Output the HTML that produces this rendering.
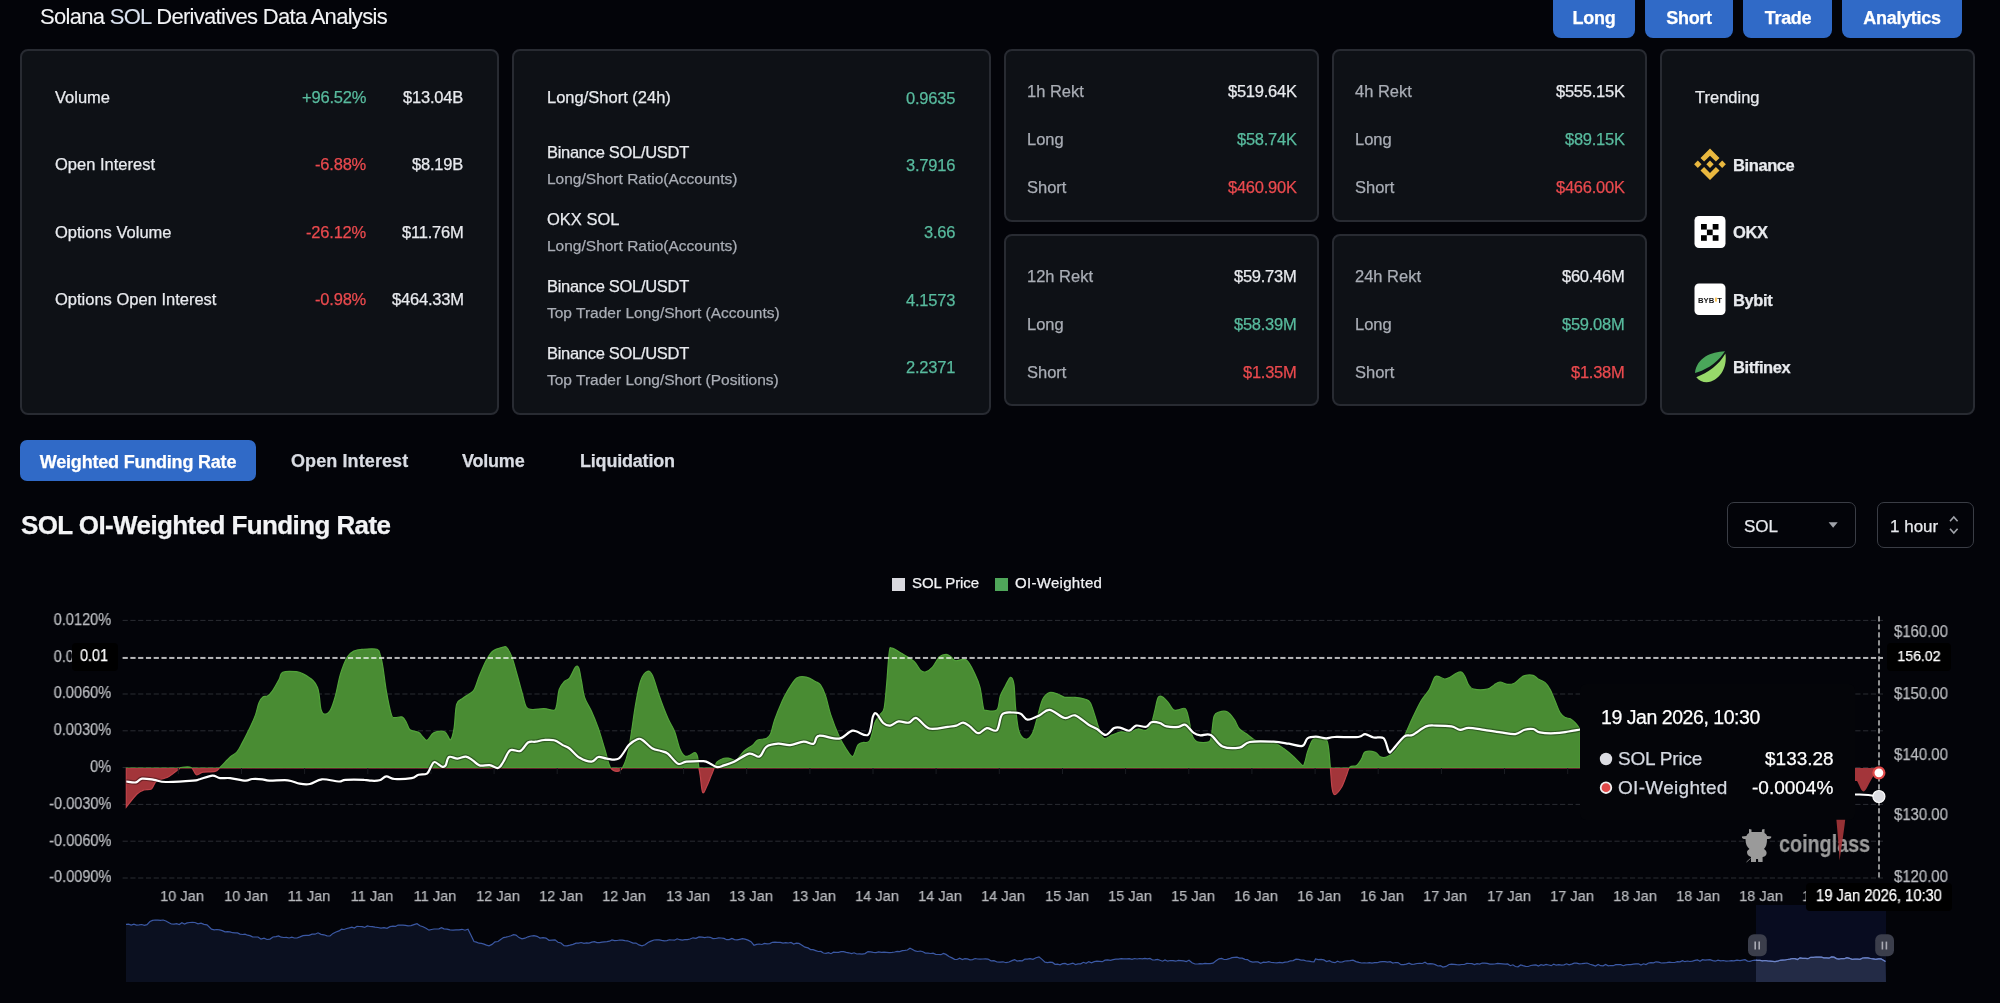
<!DOCTYPE html>
<html><head><meta charset="utf-8">
<style>
*{margin:0;padding:0;box-sizing:border-box}
html,body{width:2000px;height:1003px;overflow:hidden;background:#030409;font-family:"Liberation Sans",sans-serif;color:#e8eaee}
.a{position:absolute;white-space:nowrap;will-change:transform;-webkit-text-stroke:0.25px currentColor}
.card{position:absolute;background:#0e1116;border:2px solid #282b32;border-radius:8px}
.btn{position:absolute;top:-10px;height:48px;background:#306ac7;border-radius:8px}
svg{position:absolute;left:0;top:0}
</style></head><body>

<div class="a" style="top:5.98px;font-size:22px;line-height:22px;color:#f2f3f5;letter-spacing:-0.7px;left:40.20px;-webkit-text-stroke:0.1px currentColor;">Solana <span style="color:#d9e1ef">SOL</span> Derivatives Data Analysis</div>
<div class="btn" style="left:1553px;width:82px"></div>
<div class="a" style="top:8.56px;font-size:18px;line-height:18px;color:#ffffff;font-weight:bold;letter-spacing:-0.3px;left:1294.00px;width:600px;text-align:center;">Long</div>
<div class="btn" style="left:1645px;width:88px"></div>
<div class="a" style="top:8.56px;font-size:18px;line-height:18px;color:#ffffff;font-weight:bold;letter-spacing:-0.3px;left:1389.00px;width:600px;text-align:center;">Short</div>
<div class="btn" style="left:1743px;width:89px"></div>
<div class="a" style="top:8.56px;font-size:18px;line-height:18px;color:#ffffff;font-weight:bold;letter-spacing:-0.3px;left:1487.50px;width:600px;text-align:center;">Trade</div>
<div class="btn" style="left:1842px;width:120px"></div>
<div class="a" style="top:8.56px;font-size:18px;line-height:18px;color:#ffffff;font-weight:bold;letter-spacing:-0.3px;left:1602.00px;width:600px;text-align:center;">Analytics</div>
<div class="card" style="left:20px;top:49px;width:479px;height:366px"></div>
<div class="card" style="left:512px;top:49px;width:479px;height:366px"></div>
<div class="card" style="left:1004px;top:49px;width:315px;height:172.5px"></div>
<div class="card" style="left:1332px;top:49px;width:315px;height:172.5px"></div>
<div class="card" style="left:1004px;top:234.3px;width:315px;height:172.2px"></div>
<div class="card" style="left:1332px;top:234.3px;width:315px;height:172.2px"></div>
<div class="card" style="left:1660px;top:49px;width:315px;height:366px"></div>
<div class="a" style="top:88.93px;font-size:16.5px;line-height:16.5px;color:#e8eaee;left:55.00px;">Volume</div>
<div class="a" style="top:88.93px;font-size:16.5px;line-height:16.5px;color:#58bb9e;letter-spacing:-0.2px;right:1633.50px;text-align:right;">+96.52%</div>
<div class="a" style="top:88.93px;font-size:16.5px;line-height:16.5px;color:#e8eaee;letter-spacing:-0.2px;right:1536.50px;text-align:right;">$13.04B</div>
<div class="a" style="top:156.43px;font-size:16.5px;line-height:16.5px;color:#e8eaee;left:55.00px;">Open Interest</div>
<div class="a" style="top:156.43px;font-size:16.5px;line-height:16.5px;color:#ea4a4e;letter-spacing:-0.2px;right:1633.50px;text-align:right;">-6.88%</div>
<div class="a" style="top:156.43px;font-size:16.5px;line-height:16.5px;color:#e8eaee;letter-spacing:-0.2px;right:1536.50px;text-align:right;">$8.19B</div>
<div class="a" style="top:223.93px;font-size:16.5px;line-height:16.5px;color:#e8eaee;left:55.00px;">Options Volume</div>
<div class="a" style="top:223.93px;font-size:16.5px;line-height:16.5px;color:#ea4a4e;letter-spacing:-0.2px;right:1633.50px;text-align:right;">-26.12%</div>
<div class="a" style="top:223.93px;font-size:16.5px;line-height:16.5px;color:#e8eaee;letter-spacing:-0.2px;right:1536.50px;text-align:right;">$11.76M</div>
<div class="a" style="top:291.43px;font-size:16.5px;line-height:16.5px;color:#e8eaee;left:55.00px;">Options Open Interest</div>
<div class="a" style="top:291.43px;font-size:16.5px;line-height:16.5px;color:#ea4a4e;letter-spacing:-0.2px;right:1633.50px;text-align:right;">-0.98%</div>
<div class="a" style="top:291.43px;font-size:16.5px;line-height:16.5px;color:#e8eaee;letter-spacing:-0.2px;right:1536.50px;text-align:right;">$464.33M</div>
<div class="a" style="top:89.33px;font-size:16.5px;line-height:16.5px;color:#e8eaee;left:546.50px;">Long/Short (24h)</div>
<div class="a" style="top:143.83px;font-size:16.5px;line-height:16.5px;color:#e8eaee;letter-spacing:-0.3px;left:546.50px;">Binance SOL/USDT</div>
<div class="a" style="top:170.68px;font-size:15.5px;line-height:15.5px;color:#a9adb5;left:546.80px;">Long/Short Ratio(Accounts)</div>
<div class="a" style="top:211.03px;font-size:16.5px;line-height:16.5px;color:#e8eaee;left:546.50px;">OKX SOL</div>
<div class="a" style="top:237.88px;font-size:15.5px;line-height:15.5px;color:#a9adb5;left:546.80px;">Long/Short Ratio(Accounts)</div>
<div class="a" style="top:278.23px;font-size:16.5px;line-height:16.5px;color:#e8eaee;letter-spacing:-0.3px;left:546.50px;">Binance SOL/USDT</div>
<div class="a" style="top:305.08px;font-size:15.5px;line-height:15.5px;color:#a9adb5;left:546.80px;">Top Trader Long/Short (Accounts)</div>
<div class="a" style="top:345.43px;font-size:16.5px;line-height:16.5px;color:#e8eaee;letter-spacing:-0.3px;left:546.50px;">Binance SOL/USDT</div>
<div class="a" style="top:372.28px;font-size:15.5px;line-height:15.5px;color:#a9adb5;left:546.80px;">Top Trader Long/Short (Positions)</div>
<div class="a" style="top:89.93px;font-size:16.5px;line-height:16.5px;color:#58bb9e;letter-spacing:-0.2px;right:1044.40px;text-align:right;">0.9635</div>
<div class="a" style="top:157.13px;font-size:16.5px;line-height:16.5px;color:#58bb9e;letter-spacing:-0.2px;right:1044.40px;text-align:right;">3.7916</div>
<div class="a" style="top:224.33px;font-size:16.5px;line-height:16.5px;color:#58bb9e;letter-spacing:-0.2px;right:1044.40px;text-align:right;">3.66</div>
<div class="a" style="top:291.53px;font-size:16.5px;line-height:16.5px;color:#58bb9e;letter-spacing:-0.2px;right:1044.40px;text-align:right;">4.1573</div>
<div class="a" style="top:358.73px;font-size:16.5px;line-height:16.5px;color:#58bb9e;letter-spacing:-0.2px;right:1044.40px;text-align:right;">2.2371</div>
<div class="a" style="top:83.03px;font-size:16.5px;line-height:16.5px;color:#a9adb5;left:1026.50px;">1h Rekt</div>
<div class="a" style="top:83.03px;font-size:16.5px;line-height:16.5px;color:#e8eaee;letter-spacing:-0.25px;right:703.50px;text-align:right;">$519.64K</div>
<div class="a" style="top:131.03px;font-size:16.5px;line-height:16.5px;color:#a9adb5;left:1026.50px;">Long</div>
<div class="a" style="top:131.03px;font-size:16.5px;line-height:16.5px;color:#58bb9e;letter-spacing:-0.25px;right:703.50px;text-align:right;">$58.74K</div>
<div class="a" style="top:178.73px;font-size:16.5px;line-height:16.5px;color:#a9adb5;left:1026.50px;">Short</div>
<div class="a" style="top:178.73px;font-size:16.5px;line-height:16.5px;color:#ea4a4e;letter-spacing:-0.25px;right:703.50px;text-align:right;">$460.90K</div>
<div class="a" style="top:83.03px;font-size:16.5px;line-height:16.5px;color:#a9adb5;left:1354.50px;">4h Rekt</div>
<div class="a" style="top:83.03px;font-size:16.5px;line-height:16.5px;color:#e8eaee;letter-spacing:-0.25px;right:375.50px;text-align:right;">$555.15K</div>
<div class="a" style="top:131.03px;font-size:16.5px;line-height:16.5px;color:#a9adb5;left:1354.50px;">Long</div>
<div class="a" style="top:131.03px;font-size:16.5px;line-height:16.5px;color:#58bb9e;letter-spacing:-0.25px;right:375.50px;text-align:right;">$89.15K</div>
<div class="a" style="top:178.73px;font-size:16.5px;line-height:16.5px;color:#a9adb5;left:1354.50px;">Short</div>
<div class="a" style="top:178.73px;font-size:16.5px;line-height:16.5px;color:#ea4a4e;letter-spacing:-0.25px;right:375.50px;text-align:right;">$466.00K</div>
<div class="a" style="top:268.03px;font-size:16.5px;line-height:16.5px;color:#a9adb5;left:1026.50px;">12h Rekt</div>
<div class="a" style="top:268.03px;font-size:16.5px;line-height:16.5px;color:#e8eaee;letter-spacing:-0.25px;right:703.50px;text-align:right;">$59.73M</div>
<div class="a" style="top:316.03px;font-size:16.5px;line-height:16.5px;color:#a9adb5;left:1026.50px;">Long</div>
<div class="a" style="top:316.03px;font-size:16.5px;line-height:16.5px;color:#58bb9e;letter-spacing:-0.25px;right:703.50px;text-align:right;">$58.39M</div>
<div class="a" style="top:363.73px;font-size:16.5px;line-height:16.5px;color:#a9adb5;left:1026.50px;">Short</div>
<div class="a" style="top:363.73px;font-size:16.5px;line-height:16.5px;color:#ea4a4e;letter-spacing:-0.25px;right:703.50px;text-align:right;">$1.35M</div>
<div class="a" style="top:268.03px;font-size:16.5px;line-height:16.5px;color:#a9adb5;left:1354.50px;">24h Rekt</div>
<div class="a" style="top:268.03px;font-size:16.5px;line-height:16.5px;color:#e8eaee;letter-spacing:-0.25px;right:375.50px;text-align:right;">$60.46M</div>
<div class="a" style="top:316.03px;font-size:16.5px;line-height:16.5px;color:#a9adb5;left:1354.50px;">Long</div>
<div class="a" style="top:316.03px;font-size:16.5px;line-height:16.5px;color:#58bb9e;letter-spacing:-0.25px;right:375.50px;text-align:right;">$59.08M</div>
<div class="a" style="top:363.73px;font-size:16.5px;line-height:16.5px;color:#a9adb5;left:1354.50px;">Short</div>
<div class="a" style="top:363.73px;font-size:16.5px;line-height:16.5px;color:#ea4a4e;letter-spacing:-0.25px;right:375.50px;text-align:right;">$1.38M</div>
<div class="a" style="top:89.03px;font-size:16.5px;line-height:16.5px;color:#e8eaee;left:1694.70px;">Trending</div>
<div class="a" style="top:156.73px;font-size:16.5px;line-height:16.5px;color:#e8eaee;font-weight:bold;letter-spacing:-0.4px;left:1732.60px;">Binance</div>
<div class="a" style="top:223.53px;font-size:16.5px;line-height:16.5px;color:#e8eaee;font-weight:bold;letter-spacing:-0.4px;left:1732.60px;">OKX</div>
<div class="a" style="top:291.63px;font-size:16.5px;line-height:16.5px;color:#e8eaee;font-weight:bold;letter-spacing:-0.4px;left:1732.60px;">Bybit</div>
<div class="a" style="top:358.63px;font-size:16.5px;line-height:16.5px;color:#e8eaee;font-weight:bold;letter-spacing:-0.4px;left:1732.60px;">Bitfinex</div>
<svg width="2000" height="1003" style="pointer-events:none">
<g transform="translate(1710,164.3)" fill="#e9b83f">
 <rect x="-2.6" y="-2.6" width="5.2" height="5.2" transform="rotate(45)"/>
 <rect x="-14.8" y="-2.6" width="5.2" height="5.2" transform="rotate(45 -12.2 0)"/>
 <rect x="9.6" y="-2.6" width="5.2" height="5.2" transform="rotate(45 12.2 0)"/>
 <path d="M0,-15.8 L9.5,-6.3 L5.9,-2.7 L0,-8.6 L-5.9,-2.7 L-9.5,-6.3 Z"/>
 <path d="M0,15.8 L9.5,6.3 L5.9,2.7 L0,8.6 L-5.9,2.7 L-9.5,6.3 Z"/>
</g>
<rect x="1694.5" y="216" width="31" height="32" rx="4.5" fill="#ffffff"/>
<g fill="#000">
 <rect x="1701" y="224" width="5.8" height="5.6"/><rect x="1712.7" y="224" width="5.8" height="5.6"/>
 <rect x="1706.9" y="229.6" width="5.8" height="5.6"/>
 <rect x="1701" y="235.2" width="5.8" height="5.6"/><rect x="1712.7" y="235.2" width="5.8" height="5.6"/>
</g>
<rect x="1694.5" y="283.5" width="31" height="31.5" rx="4.5" fill="#ffffff"/>
<text x="1698" y="303.2" font-family="Liberation Sans" font-weight="bold" font-size="7.7" fill="#151515">BYB</text>
<rect x="1715.3" y="297.6" width="1.3" height="4" fill="#f7a600"/>
<text x="1717.2" y="303.2" font-family="Liberation Sans" font-weight="bold" font-size="7.7" fill="#151515">T</text>
<path d="M1725,351.3 C1711,352 1697,357.5 1695,372.9 C1703,371 1716,364.5 1723.6,353.2 Z" fill="#4aa65a"/>
<path d="M1725.4,353.6 C1719,365 1708,373 1696.3,377.2 C1700,382 1705.5,383 1711,381.6 C1720,378.5 1727.5,368 1725.4,353.6 Z" fill="#98d96a"/>
</svg>
<div class="a" style="left:20px;top:440.4px;width:236.4px;height:41px;background:#306ac7;border-radius:7px"></div>
<div class="a" style="top:452.76px;font-size:18px;line-height:18px;color:#ffffff;font-weight:bold;letter-spacing:-0.2px;left:-161.80px;width:600px;text-align:center;">Weighted Funding Rate</div>
<div class="a" style="top:452.46px;font-size:18px;line-height:18px;color:#d9dce3;font-weight:bold;letter-spacing:0.1px;left:290.60px;">Open Interest</div>
<div class="a" style="top:452.46px;font-size:18px;line-height:18px;color:#d9dce3;font-weight:bold;letter-spacing:-0.2px;left:461.50px;">Volume</div>
<div class="a" style="top:452.46px;font-size:18px;line-height:18px;color:#d9dce3;font-weight:bold;letter-spacing:-0.2px;left:579.70px;">Liquidation</div>
<div class="a" style="top:511.59px;font-size:26px;line-height:26px;color:#f2f3f5;font-weight:bold;letter-spacing:-0.6px;left:21.00px;">SOL OI-Weighted Funding Rate</div>
<div class="a" style="left:1727px;top:501.5px;width:129px;height:46.2px;border:1.3px solid #3a3d45;border-radius:7px"></div>
<div class="a" style="left:1877.3px;top:501.5px;width:97px;height:46.2px;border:1.3px solid #3a3d45;border-radius:7px"></div>
<div class="a" style="top:517.61px;font-size:17px;line-height:17px;color:#e8eaee;left:1744.00px;">SOL</div>
<div class="a" style="top:517.61px;font-size:17px;line-height:17px;color:#e8eaee;left:1889.70px;">1 hour</div>
<div class="a" style="top:575.20px;font-size:15px;line-height:15px;color:#f2f3f5;letter-spacing:-0.1px;left:911.80px;">SOL Price</div>
<div class="a" style="top:575.20px;font-size:15px;line-height:15px;color:#f2f3f5;letter-spacing:0.3px;left:1015.00px;">OI-Weighted</div>
<svg width="2000" height="1003">
<path d="M1828.6,522.3 L1837.7,522.3 L1833.15,527.8 Z" fill="#a0a3aa"/>
<path d="M1950,521.3 L1953.8,517 L1957.6,521.3 M1950,528.7 L1953.8,533 L1957.6,528.7" stroke="#a0a3aa" stroke-width="1.6" fill="none"/>
<rect x="892" y="578" width="13" height="13" fill="#d9d9df"/>
<rect x="995" y="578" width="13" height="13" fill="#4fa65a"/>
<line x1="122.6" y1="620.4" x2="1883" y2="620.4" stroke="#2a2c33" stroke-width="1" stroke-dasharray="5.2,2.57"/>
<line x1="122.6" y1="657.2" x2="1883" y2="657.2" stroke="#2a2c33" stroke-width="1" stroke-dasharray="5.2,2.57"/>
<line x1="122.6" y1="694.0" x2="1883" y2="694.0" stroke="#2a2c33" stroke-width="1" stroke-dasharray="5.2,2.57"/>
<line x1="122.6" y1="730.8" x2="1883" y2="730.8" stroke="#2a2c33" stroke-width="1" stroke-dasharray="5.2,2.57"/>
<line x1="122.6" y1="767.6" x2="1883" y2="767.6" stroke="#2a2c33" stroke-width="1" stroke-dasharray="5.2,2.57"/>
<line x1="122.6" y1="804.4" x2="1883" y2="804.4" stroke="#2a2c33" stroke-width="1" stroke-dasharray="5.2,2.57"/>
<line x1="122.6" y1="841.2" x2="1883" y2="841.2" stroke="#2a2c33" stroke-width="1" stroke-dasharray="5.2,2.57"/>
<line x1="122.6" y1="878.0" x2="1883" y2="878.0" stroke="#2a2c33" stroke-width="1" stroke-dasharray="5.2,2.57"/>
<defs><clipPath id="up"><rect x="0" y="0" width="2000" height="768"/></clipPath><clipPath id="dn"><rect x="0" y="768" width="2000" height="300"/></clipPath></defs>
<path d="M126.3,807.0 C128.1,804.8 134.1,796.8 137.0,794.0 C139.9,791.2 141.3,790.8 143.7,790.0 C146.1,789.2 149.4,790.3 151.4,789.0 C153.4,787.7 153.8,783.7 155.6,782.0 C157.4,780.3 160.2,779.9 162.4,779.0 C164.6,778.1 166.2,778.1 169.0,776.4 C171.8,774.7 177.3,770.3 179.3,768.8 C181.0,767.3 179.3,767.7 181.0,767.5 C183.0,767.3 188.6,766.3 191.2,767.5 C193.8,768.7 194.3,773.9 196.3,774.7 C198.3,775.5 199.9,772.8 203.0,772.2 C206.1,771.7 212.2,772.2 215.0,771.4 C217.8,770.6 217.5,769.9 220.0,767.5 C222.5,765.1 227.4,759.6 230.2,757.0 C233.0,754.4 235.0,754.2 237.0,751.9 C239.0,749.6 239.8,747.6 242.0,743.4 C244.2,739.1 248.2,731.2 250.5,726.4 C252.8,721.6 254.2,718.5 255.6,714.6 C257.0,710.7 257.7,705.7 259.0,702.7 C260.3,699.7 261.8,697.9 263.2,696.8 C264.6,695.7 265.9,697.0 267.5,696.0 C269.1,695.0 270.5,693.6 272.5,690.8 C274.5,688.0 277.6,682.1 279.3,679.0 C281.0,675.9 279.9,673.4 282.7,672.2 C285.5,671.0 292.9,671.4 296.3,671.7 C299.7,672.0 300.2,672.4 303.0,673.9 C305.8,675.4 310.8,678.4 313.2,680.7 C315.6,683.0 316.5,685.0 317.5,687.5 C318.5,690.0 318.7,692.3 319.3,696.0 C319.9,699.7 320.1,706.5 321.0,709.5 C321.9,712.5 322.8,714.1 324.4,714.2 C325.9,714.3 328.5,713.3 330.3,710.3 C332.1,707.3 333.7,702.0 335.4,696.0 C337.1,690.0 338.5,680.5 340.5,674.0 C342.5,667.5 345.1,660.8 347.3,657.0 C349.6,653.2 351.5,652.3 354.0,651.0 C356.5,649.7 358.7,649.6 362.5,649.3 C366.3,649.0 374.0,648.3 377.0,649.3 C380.0,650.3 379.3,652.3 380.3,655.3 C381.3,658.2 381.9,661.1 382.9,667.0 C383.9,672.9 384.9,682.9 386.3,690.8 C387.7,698.7 390.0,710.1 391.4,714.6 C392.8,719.1 392.9,717.2 394.7,717.6 C396.5,718.0 400.4,716.2 402.4,717.1 C404.4,718.0 405.3,720.9 406.6,723.0 C407.9,725.1 408.0,728.2 410.0,729.8 C412.0,731.4 416.4,731.3 418.5,732.4 C420.6,733.5 421.3,735.3 422.7,736.6 C424.1,737.9 425.2,740.9 427.0,740.3 C428.8,739.7 430.9,734.4 433.7,732.9 C436.5,731.4 441.6,731.1 443.9,731.5 C446.2,731.9 446.2,733.6 447.3,735.0 C448.4,736.4 449.6,740.9 450.7,739.7 C451.8,738.6 453.1,734.0 454.1,728.1 C455.1,722.2 455.2,709.3 456.6,704.4 C458.0,699.5 460.4,700.2 462.5,698.5 C464.6,696.8 467.3,695.4 469.3,693.9 C471.3,692.4 472.7,692.2 474.4,689.2 C476.1,686.2 477.5,680.4 479.5,675.6 C481.5,670.8 484.1,664.4 486.3,660.3 C488.6,656.2 490.2,653.2 493.0,651.0 C495.8,648.8 500.9,647.7 503.2,647.1 C505.5,646.5 505.4,646.0 506.8,647.6 C508.2,649.2 510.2,652.6 511.9,657.0 C513.6,661.4 515.2,668.1 516.9,674.0 C518.6,679.9 520.4,687.0 522.0,692.5 C523.6,698.0 524.6,704.2 526.3,707.0 C528.0,709.8 529.2,709.2 532.2,709.5 C535.2,709.8 540.4,708.5 544.1,708.6 C547.8,708.7 552.1,711.0 554.2,710.3 C556.3,709.6 555.9,707.9 556.8,704.4 C557.6,700.9 558.0,693.0 559.3,689.2 C560.6,685.4 562.7,683.4 564.4,681.5 C566.1,679.6 567.7,680.5 569.5,678.1 C571.3,675.7 573.9,668.8 575.4,667.1 C576.9,665.4 577.8,665.7 578.8,668.0 C579.8,670.3 580.4,675.8 581.4,680.7 C582.4,685.6 583.0,692.5 584.7,697.6 C586.4,702.7 589.2,706.1 591.5,711.2 C593.8,716.3 596.0,721.6 598.3,728.1 C600.6,734.6 603.1,743.7 605.1,750.2 C607.1,756.7 608.2,763.6 610.2,767.1 C612.2,770.6 614.9,771.4 617.0,771.4 C619.1,771.4 620.9,770.9 622.9,767.1 C624.9,763.3 626.7,759.0 628.8,748.5 C630.9,738.0 633.6,715.7 635.6,704.4 C637.6,693.1 638.7,686.2 640.7,680.7 C642.7,675.2 645.5,672.2 647.5,671.4 C649.5,670.5 650.5,671.5 652.5,675.6 C654.5,679.7 656.8,688.9 659.3,696.0 C661.8,703.1 665.2,712.1 667.8,718.0 C670.3,723.9 672.6,726.4 674.6,731.5 C676.6,736.6 678.0,744.4 679.7,748.5 C681.4,752.6 683.0,755.0 684.7,756.1 C686.4,757.2 688.1,755.9 689.8,755.3 C691.5,754.7 693.8,752.4 695.1,752.7 C696.4,753.0 697.0,754.6 697.6,757.0 C698.2,759.4 698.4,764.0 698.8,767.1 C699.2,770.2 699.6,771.4 700.2,775.6 C700.9,779.8 701.6,790.8 702.7,792.5 C703.8,794.2 705.6,788.6 707.0,785.8 C708.4,783.0 709.9,778.7 711.2,775.6 C712.5,772.5 713.6,769.4 714.6,767.1 C715.6,764.8 715.6,763.5 717.1,762.0 C718.6,760.5 721.9,758.9 723.9,758.3 C725.9,757.7 727.0,758.0 729.0,758.3 C731.0,758.6 734.1,760.5 735.8,760.3 C737.5,760.1 737.8,758.5 739.2,757.0 C740.6,755.5 742.0,753.0 744.2,751.0 C746.5,749.0 750.4,746.9 752.7,745.1 C755.0,743.3 755.5,741.1 757.8,740.0 C760.1,738.9 764.2,739.6 766.3,738.6 C768.4,737.6 769.1,737.2 770.5,734.1 C771.9,731.0 772.9,724.9 774.7,719.7 C776.5,714.5 779.5,707.2 781.5,702.7 C783.5,698.2 784.1,696.6 786.6,692.5 C789.1,688.4 793.4,680.6 796.8,678.1 C800.2,675.6 803.9,676.7 807.0,677.3 C810.1,677.9 813.1,680.2 815.4,681.5 C817.6,682.8 818.8,682.5 820.5,684.9 C822.2,687.3 823.9,690.9 825.6,695.9 C827.3,700.9 828.4,707.8 830.7,714.6 C833.0,721.4 836.7,731.0 839.2,736.6 C841.7,742.2 843.6,745.2 845.9,748.5 C848.1,751.8 850.7,757.2 852.7,756.6 C854.7,756.0 856.1,747.5 857.8,745.1 C859.5,742.8 860.9,743.2 862.9,742.5 C864.9,741.8 867.7,744.0 869.7,740.8 C871.7,737.5 873.0,727.4 874.7,723.0 C876.4,718.6 878.4,717.1 880.0,714.6 C881.6,712.1 883.1,713.2 884.2,707.8 C885.3,702.4 885.9,691.7 886.8,682.4 C887.6,673.1 888.4,657.6 889.3,651.9 C890.1,646.2 889.8,647.8 891.9,648.1 C894.0,648.4 898.3,651.4 902.0,653.6 C905.7,655.8 910.8,658.4 913.9,661.2 C917.0,664.0 918.7,668.7 920.7,670.5 C922.7,672.3 923.8,672.5 925.8,671.9 C927.8,671.3 930.2,669.6 932.5,667.1 C934.8,664.6 937.0,659.1 939.3,657.0 C941.6,654.9 944.1,654.4 946.1,654.4 C948.1,654.4 949.7,656.0 951.2,657.0 C952.8,658.0 952.9,660.2 955.4,660.7 C957.9,661.2 963.1,657.8 966.4,660.0 C969.6,662.2 972.6,669.3 974.9,673.9 C977.2,678.5 978.6,681.9 980.0,687.5 C981.4,693.1 982.4,704.0 983.4,707.8 C984.4,711.6 983.6,710.0 985.9,710.3 C988.1,710.6 994.5,712.2 996.9,709.8 C999.3,707.4 998.9,699.9 1000.3,695.9 C1001.7,691.9 1003.7,688.9 1005.4,685.8 C1007.1,682.7 1009.1,677.6 1010.5,677.3 C1011.9,677.0 1013.0,679.0 1013.9,684.1 C1014.8,689.2 1014.8,699.9 1015.6,707.8 C1016.5,715.7 1017.3,726.3 1019.0,731.5 C1020.7,736.7 1023.5,738.9 1025.8,739.2 C1028.0,739.5 1030.5,737.0 1032.5,733.2 C1034.5,729.4 1035.9,721.9 1037.6,716.3 C1039.3,710.6 1040.7,703.3 1042.7,699.3 C1044.7,695.3 1047.0,693.4 1049.5,692.5 C1052.0,691.6 1055.5,693.4 1058.0,694.2 C1060.5,695.0 1061.9,696.8 1064.7,697.3 C1067.5,697.8 1071.7,697.0 1075.1,697.3 C1078.5,697.6 1082.8,698.4 1085.3,699.3 C1087.8,700.2 1088.8,700.2 1090.3,702.7 C1091.8,705.2 1093.2,710.4 1094.6,714.6 C1096.0,718.8 1097.2,724.2 1098.8,728.1 C1100.3,732.0 1101.6,737.2 1103.9,738.3 C1106.2,739.4 1109.6,736.0 1112.4,734.9 C1115.2,733.8 1118.0,732.3 1120.8,731.9 C1123.6,731.5 1126.5,732.9 1129.3,732.4 C1132.1,731.9 1135.0,729.4 1137.8,729.0 C1140.6,728.6 1144.0,731.2 1146.3,730.2 C1148.6,729.2 1150.0,726.2 1151.4,723.0 C1152.8,719.8 1153.6,715.4 1154.7,711.2 C1155.8,707.0 1156.8,700.0 1158.1,697.6 C1159.4,695.2 1160.7,695.9 1162.4,696.8 C1164.1,697.6 1166.5,700.5 1168.3,702.7 C1170.1,704.9 1171.7,708.6 1173.4,709.8 C1175.1,711.0 1176.5,710.0 1178.5,709.8 C1180.5,709.6 1183.6,707.2 1185.3,708.6 C1187.0,710.0 1187.5,713.6 1188.6,718.0 C1189.7,722.4 1190.6,730.9 1192.0,734.9 C1193.4,738.9 1194.3,740.6 1197.1,741.7 C1199.9,742.8 1206.6,742.8 1209.0,741.7 C1211.4,740.6 1210.7,739.1 1211.5,734.9 C1212.3,730.7 1212.8,720.1 1214.1,716.3 C1215.4,712.5 1217.0,712.7 1219.2,712.0 C1221.5,711.3 1225.1,710.7 1227.6,712.0 C1230.1,713.3 1232.4,716.9 1234.4,719.7 C1236.4,722.5 1237.2,726.5 1239.5,729.0 C1241.8,731.5 1245.5,733.1 1248.0,734.9 C1250.5,736.7 1252.7,739.0 1254.7,740.0 C1256.7,741.0 1256.8,740.4 1260.0,740.8 C1263.2,741.2 1269.6,741.2 1273.6,742.5 C1277.5,743.8 1280.3,746.1 1283.7,748.5 C1287.1,750.9 1290.8,754.1 1293.9,756.9 C1297.0,759.7 1300.6,764.5 1302.4,765.4 C1304.2,766.2 1304.1,764.2 1304.9,762.0 C1305.8,759.8 1306.2,755.6 1307.5,751.9 C1308.8,748.2 1310.8,742.4 1312.5,740.0 C1314.2,737.6 1315.3,737.5 1317.6,737.5 C1319.9,737.5 1324.3,737.9 1326.1,739.7 C1327.9,741.5 1327.9,743.9 1328.6,748.5 C1329.3,753.1 1329.7,760.6 1330.3,767.1 C1330.9,773.6 1331.3,782.9 1332.0,787.5 C1332.7,792.1 1333.0,794.6 1334.6,794.6 C1336.2,794.6 1339.4,790.7 1341.4,787.5 C1343.4,784.3 1345.0,779.0 1346.4,775.6 C1347.8,772.2 1348.1,768.8 1349.8,767.1 C1351.5,765.4 1354.6,766.8 1356.6,765.4 C1358.6,764.0 1360.3,760.9 1361.7,758.6 C1363.1,756.4 1362.8,753.0 1365.1,751.9 C1367.4,750.8 1372.8,751.4 1375.3,752.2 C1377.8,753.0 1378.3,756.1 1380.3,756.9 C1382.3,757.7 1384.5,758.0 1387.1,756.9 C1389.6,755.8 1392.8,753.6 1395.6,750.2 C1398.4,746.8 1401.3,742.0 1404.1,736.6 C1406.9,731.2 1409.7,723.9 1412.5,718.0 C1415.3,712.1 1418.2,705.8 1421.0,701.0 C1423.8,696.2 1427.2,693.2 1429.5,689.2 C1431.8,685.2 1433.2,679.4 1434.6,677.3 C1436.0,675.2 1436.3,676.1 1438.0,676.4 C1439.7,676.7 1442.7,678.9 1444.7,679.0 C1446.7,679.1 1448.0,678.3 1450.0,677.3 C1452.0,676.3 1454.8,673.9 1456.8,673.0 C1458.8,672.1 1460.5,671.5 1461.9,672.2 C1463.3,672.9 1464.2,675.2 1465.3,677.3 C1466.4,679.4 1467.2,682.9 1468.6,684.9 C1470.0,686.9 1470.6,688.5 1473.7,689.2 C1476.8,689.9 1483.9,689.9 1487.3,689.2 C1490.7,688.5 1492.0,686.1 1494.1,684.9 C1496.2,683.7 1497.8,682.1 1500.0,682.0 C1502.2,681.9 1505.2,684.2 1507.6,684.4 C1510.0,684.6 1512.4,684.1 1514.4,683.2 C1516.4,682.3 1517.8,680.3 1519.5,679.0 C1521.2,677.7 1522.3,676.2 1524.6,675.6 C1526.9,675.0 1530.8,674.7 1533.1,675.3 C1535.3,675.9 1536.1,677.8 1538.1,679.0 C1540.1,680.2 1542.9,680.7 1544.9,682.4 C1546.9,684.1 1548.3,686.1 1550.0,689.2 C1551.7,692.3 1553.4,697.0 1555.1,701.0 C1556.8,705.0 1558.5,710.1 1560.2,712.9 C1561.9,715.7 1563.6,716.6 1565.3,717.6 C1567.0,718.6 1568.6,717.9 1570.3,718.8 C1572.0,719.7 1573.7,721.2 1575.4,723.0 C1577.1,724.8 1579.5,728.4 1580.3,729.5 L1580.3,768 L126.3,768 Z" fill="#498c33" clip-path="url(#up)"/>
<path d="M126.3,807.0 C128.1,804.8 134.1,796.8 137.0,794.0 C139.9,791.2 141.3,790.8 143.7,790.0 C146.1,789.2 149.4,790.3 151.4,789.0 C153.4,787.7 153.8,783.7 155.6,782.0 C157.4,780.3 160.2,779.9 162.4,779.0 C164.6,778.1 166.2,778.1 169.0,776.4 C171.8,774.7 177.3,770.3 179.3,768.8 C181.0,767.3 179.3,767.7 181.0,767.5 C183.0,767.3 188.6,766.3 191.2,767.5 C193.8,768.7 194.3,773.9 196.3,774.7 C198.3,775.5 199.9,772.8 203.0,772.2 C206.1,771.7 212.2,772.2 215.0,771.4 C217.8,770.6 217.5,769.9 220.0,767.5 C222.5,765.1 227.4,759.6 230.2,757.0 C233.0,754.4 235.0,754.2 237.0,751.9 C239.0,749.6 239.8,747.6 242.0,743.4 C244.2,739.1 248.2,731.2 250.5,726.4 C252.8,721.6 254.2,718.5 255.6,714.6 C257.0,710.7 257.7,705.7 259.0,702.7 C260.3,699.7 261.8,697.9 263.2,696.8 C264.6,695.7 265.9,697.0 267.5,696.0 C269.1,695.0 270.5,693.6 272.5,690.8 C274.5,688.0 277.6,682.1 279.3,679.0 C281.0,675.9 279.9,673.4 282.7,672.2 C285.5,671.0 292.9,671.4 296.3,671.7 C299.7,672.0 300.2,672.4 303.0,673.9 C305.8,675.4 310.8,678.4 313.2,680.7 C315.6,683.0 316.5,685.0 317.5,687.5 C318.5,690.0 318.7,692.3 319.3,696.0 C319.9,699.7 320.1,706.5 321.0,709.5 C321.9,712.5 322.8,714.1 324.4,714.2 C325.9,714.3 328.5,713.3 330.3,710.3 C332.1,707.3 333.7,702.0 335.4,696.0 C337.1,690.0 338.5,680.5 340.5,674.0 C342.5,667.5 345.1,660.8 347.3,657.0 C349.6,653.2 351.5,652.3 354.0,651.0 C356.5,649.7 358.7,649.6 362.5,649.3 C366.3,649.0 374.0,648.3 377.0,649.3 C380.0,650.3 379.3,652.3 380.3,655.3 C381.3,658.2 381.9,661.1 382.9,667.0 C383.9,672.9 384.9,682.9 386.3,690.8 C387.7,698.7 390.0,710.1 391.4,714.6 C392.8,719.1 392.9,717.2 394.7,717.6 C396.5,718.0 400.4,716.2 402.4,717.1 C404.4,718.0 405.3,720.9 406.6,723.0 C407.9,725.1 408.0,728.2 410.0,729.8 C412.0,731.4 416.4,731.3 418.5,732.4 C420.6,733.5 421.3,735.3 422.7,736.6 C424.1,737.9 425.2,740.9 427.0,740.3 C428.8,739.7 430.9,734.4 433.7,732.9 C436.5,731.4 441.6,731.1 443.9,731.5 C446.2,731.9 446.2,733.6 447.3,735.0 C448.4,736.4 449.6,740.9 450.7,739.7 C451.8,738.6 453.1,734.0 454.1,728.1 C455.1,722.2 455.2,709.3 456.6,704.4 C458.0,699.5 460.4,700.2 462.5,698.5 C464.6,696.8 467.3,695.4 469.3,693.9 C471.3,692.4 472.7,692.2 474.4,689.2 C476.1,686.2 477.5,680.4 479.5,675.6 C481.5,670.8 484.1,664.4 486.3,660.3 C488.6,656.2 490.2,653.2 493.0,651.0 C495.8,648.8 500.9,647.7 503.2,647.1 C505.5,646.5 505.4,646.0 506.8,647.6 C508.2,649.2 510.2,652.6 511.9,657.0 C513.6,661.4 515.2,668.1 516.9,674.0 C518.6,679.9 520.4,687.0 522.0,692.5 C523.6,698.0 524.6,704.2 526.3,707.0 C528.0,709.8 529.2,709.2 532.2,709.5 C535.2,709.8 540.4,708.5 544.1,708.6 C547.8,708.7 552.1,711.0 554.2,710.3 C556.3,709.6 555.9,707.9 556.8,704.4 C557.6,700.9 558.0,693.0 559.3,689.2 C560.6,685.4 562.7,683.4 564.4,681.5 C566.1,679.6 567.7,680.5 569.5,678.1 C571.3,675.7 573.9,668.8 575.4,667.1 C576.9,665.4 577.8,665.7 578.8,668.0 C579.8,670.3 580.4,675.8 581.4,680.7 C582.4,685.6 583.0,692.5 584.7,697.6 C586.4,702.7 589.2,706.1 591.5,711.2 C593.8,716.3 596.0,721.6 598.3,728.1 C600.6,734.6 603.1,743.7 605.1,750.2 C607.1,756.7 608.2,763.6 610.2,767.1 C612.2,770.6 614.9,771.4 617.0,771.4 C619.1,771.4 620.9,770.9 622.9,767.1 C624.9,763.3 626.7,759.0 628.8,748.5 C630.9,738.0 633.6,715.7 635.6,704.4 C637.6,693.1 638.7,686.2 640.7,680.7 C642.7,675.2 645.5,672.2 647.5,671.4 C649.5,670.5 650.5,671.5 652.5,675.6 C654.5,679.7 656.8,688.9 659.3,696.0 C661.8,703.1 665.2,712.1 667.8,718.0 C670.3,723.9 672.6,726.4 674.6,731.5 C676.6,736.6 678.0,744.4 679.7,748.5 C681.4,752.6 683.0,755.0 684.7,756.1 C686.4,757.2 688.1,755.9 689.8,755.3 C691.5,754.7 693.8,752.4 695.1,752.7 C696.4,753.0 697.0,754.6 697.6,757.0 C698.2,759.4 698.4,764.0 698.8,767.1 C699.2,770.2 699.6,771.4 700.2,775.6 C700.9,779.8 701.6,790.8 702.7,792.5 C703.8,794.2 705.6,788.6 707.0,785.8 C708.4,783.0 709.9,778.7 711.2,775.6 C712.5,772.5 713.6,769.4 714.6,767.1 C715.6,764.8 715.6,763.5 717.1,762.0 C718.6,760.5 721.9,758.9 723.9,758.3 C725.9,757.7 727.0,758.0 729.0,758.3 C731.0,758.6 734.1,760.5 735.8,760.3 C737.5,760.1 737.8,758.5 739.2,757.0 C740.6,755.5 742.0,753.0 744.2,751.0 C746.5,749.0 750.4,746.9 752.7,745.1 C755.0,743.3 755.5,741.1 757.8,740.0 C760.1,738.9 764.2,739.6 766.3,738.6 C768.4,737.6 769.1,737.2 770.5,734.1 C771.9,731.0 772.9,724.9 774.7,719.7 C776.5,714.5 779.5,707.2 781.5,702.7 C783.5,698.2 784.1,696.6 786.6,692.5 C789.1,688.4 793.4,680.6 796.8,678.1 C800.2,675.6 803.9,676.7 807.0,677.3 C810.1,677.9 813.1,680.2 815.4,681.5 C817.6,682.8 818.8,682.5 820.5,684.9 C822.2,687.3 823.9,690.9 825.6,695.9 C827.3,700.9 828.4,707.8 830.7,714.6 C833.0,721.4 836.7,731.0 839.2,736.6 C841.7,742.2 843.6,745.2 845.9,748.5 C848.1,751.8 850.7,757.2 852.7,756.6 C854.7,756.0 856.1,747.5 857.8,745.1 C859.5,742.8 860.9,743.2 862.9,742.5 C864.9,741.8 867.7,744.0 869.7,740.8 C871.7,737.5 873.0,727.4 874.7,723.0 C876.4,718.6 878.4,717.1 880.0,714.6 C881.6,712.1 883.1,713.2 884.2,707.8 C885.3,702.4 885.9,691.7 886.8,682.4 C887.6,673.1 888.4,657.6 889.3,651.9 C890.1,646.2 889.8,647.8 891.9,648.1 C894.0,648.4 898.3,651.4 902.0,653.6 C905.7,655.8 910.8,658.4 913.9,661.2 C917.0,664.0 918.7,668.7 920.7,670.5 C922.7,672.3 923.8,672.5 925.8,671.9 C927.8,671.3 930.2,669.6 932.5,667.1 C934.8,664.6 937.0,659.1 939.3,657.0 C941.6,654.9 944.1,654.4 946.1,654.4 C948.1,654.4 949.7,656.0 951.2,657.0 C952.8,658.0 952.9,660.2 955.4,660.7 C957.9,661.2 963.1,657.8 966.4,660.0 C969.6,662.2 972.6,669.3 974.9,673.9 C977.2,678.5 978.6,681.9 980.0,687.5 C981.4,693.1 982.4,704.0 983.4,707.8 C984.4,711.6 983.6,710.0 985.9,710.3 C988.1,710.6 994.5,712.2 996.9,709.8 C999.3,707.4 998.9,699.9 1000.3,695.9 C1001.7,691.9 1003.7,688.9 1005.4,685.8 C1007.1,682.7 1009.1,677.6 1010.5,677.3 C1011.9,677.0 1013.0,679.0 1013.9,684.1 C1014.8,689.2 1014.8,699.9 1015.6,707.8 C1016.5,715.7 1017.3,726.3 1019.0,731.5 C1020.7,736.7 1023.5,738.9 1025.8,739.2 C1028.0,739.5 1030.5,737.0 1032.5,733.2 C1034.5,729.4 1035.9,721.9 1037.6,716.3 C1039.3,710.6 1040.7,703.3 1042.7,699.3 C1044.7,695.3 1047.0,693.4 1049.5,692.5 C1052.0,691.6 1055.5,693.4 1058.0,694.2 C1060.5,695.0 1061.9,696.8 1064.7,697.3 C1067.5,697.8 1071.7,697.0 1075.1,697.3 C1078.5,697.6 1082.8,698.4 1085.3,699.3 C1087.8,700.2 1088.8,700.2 1090.3,702.7 C1091.8,705.2 1093.2,710.4 1094.6,714.6 C1096.0,718.8 1097.2,724.2 1098.8,728.1 C1100.3,732.0 1101.6,737.2 1103.9,738.3 C1106.2,739.4 1109.6,736.0 1112.4,734.9 C1115.2,733.8 1118.0,732.3 1120.8,731.9 C1123.6,731.5 1126.5,732.9 1129.3,732.4 C1132.1,731.9 1135.0,729.4 1137.8,729.0 C1140.6,728.6 1144.0,731.2 1146.3,730.2 C1148.6,729.2 1150.0,726.2 1151.4,723.0 C1152.8,719.8 1153.6,715.4 1154.7,711.2 C1155.8,707.0 1156.8,700.0 1158.1,697.6 C1159.4,695.2 1160.7,695.9 1162.4,696.8 C1164.1,697.6 1166.5,700.5 1168.3,702.7 C1170.1,704.9 1171.7,708.6 1173.4,709.8 C1175.1,711.0 1176.5,710.0 1178.5,709.8 C1180.5,709.6 1183.6,707.2 1185.3,708.6 C1187.0,710.0 1187.5,713.6 1188.6,718.0 C1189.7,722.4 1190.6,730.9 1192.0,734.9 C1193.4,738.9 1194.3,740.6 1197.1,741.7 C1199.9,742.8 1206.6,742.8 1209.0,741.7 C1211.4,740.6 1210.7,739.1 1211.5,734.9 C1212.3,730.7 1212.8,720.1 1214.1,716.3 C1215.4,712.5 1217.0,712.7 1219.2,712.0 C1221.5,711.3 1225.1,710.7 1227.6,712.0 C1230.1,713.3 1232.4,716.9 1234.4,719.7 C1236.4,722.5 1237.2,726.5 1239.5,729.0 C1241.8,731.5 1245.5,733.1 1248.0,734.9 C1250.5,736.7 1252.7,739.0 1254.7,740.0 C1256.7,741.0 1256.8,740.4 1260.0,740.8 C1263.2,741.2 1269.6,741.2 1273.6,742.5 C1277.5,743.8 1280.3,746.1 1283.7,748.5 C1287.1,750.9 1290.8,754.1 1293.9,756.9 C1297.0,759.7 1300.6,764.5 1302.4,765.4 C1304.2,766.2 1304.1,764.2 1304.9,762.0 C1305.8,759.8 1306.2,755.6 1307.5,751.9 C1308.8,748.2 1310.8,742.4 1312.5,740.0 C1314.2,737.6 1315.3,737.5 1317.6,737.5 C1319.9,737.5 1324.3,737.9 1326.1,739.7 C1327.9,741.5 1327.9,743.9 1328.6,748.5 C1329.3,753.1 1329.7,760.6 1330.3,767.1 C1330.9,773.6 1331.3,782.9 1332.0,787.5 C1332.7,792.1 1333.0,794.6 1334.6,794.6 C1336.2,794.6 1339.4,790.7 1341.4,787.5 C1343.4,784.3 1345.0,779.0 1346.4,775.6 C1347.8,772.2 1348.1,768.8 1349.8,767.1 C1351.5,765.4 1354.6,766.8 1356.6,765.4 C1358.6,764.0 1360.3,760.9 1361.7,758.6 C1363.1,756.4 1362.8,753.0 1365.1,751.9 C1367.4,750.8 1372.8,751.4 1375.3,752.2 C1377.8,753.0 1378.3,756.1 1380.3,756.9 C1382.3,757.7 1384.5,758.0 1387.1,756.9 C1389.6,755.8 1392.8,753.6 1395.6,750.2 C1398.4,746.8 1401.3,742.0 1404.1,736.6 C1406.9,731.2 1409.7,723.9 1412.5,718.0 C1415.3,712.1 1418.2,705.8 1421.0,701.0 C1423.8,696.2 1427.2,693.2 1429.5,689.2 C1431.8,685.2 1433.2,679.4 1434.6,677.3 C1436.0,675.2 1436.3,676.1 1438.0,676.4 C1439.7,676.7 1442.7,678.9 1444.7,679.0 C1446.7,679.1 1448.0,678.3 1450.0,677.3 C1452.0,676.3 1454.8,673.9 1456.8,673.0 C1458.8,672.1 1460.5,671.5 1461.9,672.2 C1463.3,672.9 1464.2,675.2 1465.3,677.3 C1466.4,679.4 1467.2,682.9 1468.6,684.9 C1470.0,686.9 1470.6,688.5 1473.7,689.2 C1476.8,689.9 1483.9,689.9 1487.3,689.2 C1490.7,688.5 1492.0,686.1 1494.1,684.9 C1496.2,683.7 1497.8,682.1 1500.0,682.0 C1502.2,681.9 1505.2,684.2 1507.6,684.4 C1510.0,684.6 1512.4,684.1 1514.4,683.2 C1516.4,682.3 1517.8,680.3 1519.5,679.0 C1521.2,677.7 1522.3,676.2 1524.6,675.6 C1526.9,675.0 1530.8,674.7 1533.1,675.3 C1535.3,675.9 1536.1,677.8 1538.1,679.0 C1540.1,680.2 1542.9,680.7 1544.9,682.4 C1546.9,684.1 1548.3,686.1 1550.0,689.2 C1551.7,692.3 1553.4,697.0 1555.1,701.0 C1556.8,705.0 1558.5,710.1 1560.2,712.9 C1561.9,715.7 1563.6,716.6 1565.3,717.6 C1567.0,718.6 1568.6,717.9 1570.3,718.8 C1572.0,719.7 1573.7,721.2 1575.4,723.0 C1577.1,724.8 1579.5,728.4 1580.3,729.5 L1580.3,768 L126.3,768 Z" fill="#a3353a" clip-path="url(#dn)"/>
<path d="M126.3,807.0 C128.1,804.8 134.1,796.8 137.0,794.0 C139.9,791.2 141.3,790.8 143.7,790.0 C146.1,789.2 149.4,790.3 151.4,789.0 C153.4,787.7 153.8,783.7 155.6,782.0 C157.4,780.3 160.2,779.9 162.4,779.0 C164.6,778.1 166.2,778.1 169.0,776.4 C171.8,774.7 177.3,770.3 179.3,768.8 C181.0,767.3 179.3,767.7 181.0,767.5 C183.0,767.3 188.6,766.3 191.2,767.5 C193.8,768.7 194.3,773.9 196.3,774.7 C198.3,775.5 199.9,772.8 203.0,772.2 C206.1,771.7 212.2,772.2 215.0,771.4 C217.8,770.6 217.5,769.9 220.0,767.5 C222.5,765.1 227.4,759.6 230.2,757.0 C233.0,754.4 235.0,754.2 237.0,751.9 C239.0,749.6 239.8,747.6 242.0,743.4 C244.2,739.1 248.2,731.2 250.5,726.4 C252.8,721.6 254.2,718.5 255.6,714.6 C257.0,710.7 257.7,705.7 259.0,702.7 C260.3,699.7 261.8,697.9 263.2,696.8 C264.6,695.7 265.9,697.0 267.5,696.0 C269.1,695.0 270.5,693.6 272.5,690.8 C274.5,688.0 277.6,682.1 279.3,679.0 C281.0,675.9 279.9,673.4 282.7,672.2 C285.5,671.0 292.9,671.4 296.3,671.7 C299.7,672.0 300.2,672.4 303.0,673.9 C305.8,675.4 310.8,678.4 313.2,680.7 C315.6,683.0 316.5,685.0 317.5,687.5 C318.5,690.0 318.7,692.3 319.3,696.0 C319.9,699.7 320.1,706.5 321.0,709.5 C321.9,712.5 322.8,714.1 324.4,714.2 C325.9,714.3 328.5,713.3 330.3,710.3 C332.1,707.3 333.7,702.0 335.4,696.0 C337.1,690.0 338.5,680.5 340.5,674.0 C342.5,667.5 345.1,660.8 347.3,657.0 C349.6,653.2 351.5,652.3 354.0,651.0 C356.5,649.7 358.7,649.6 362.5,649.3 C366.3,649.0 374.0,648.3 377.0,649.3 C380.0,650.3 379.3,652.3 380.3,655.3 C381.3,658.2 381.9,661.1 382.9,667.0 C383.9,672.9 384.9,682.9 386.3,690.8 C387.7,698.7 390.0,710.1 391.4,714.6 C392.8,719.1 392.9,717.2 394.7,717.6 C396.5,718.0 400.4,716.2 402.4,717.1 C404.4,718.0 405.3,720.9 406.6,723.0 C407.9,725.1 408.0,728.2 410.0,729.8 C412.0,731.4 416.4,731.3 418.5,732.4 C420.6,733.5 421.3,735.3 422.7,736.6 C424.1,737.9 425.2,740.9 427.0,740.3 C428.8,739.7 430.9,734.4 433.7,732.9 C436.5,731.4 441.6,731.1 443.9,731.5 C446.2,731.9 446.2,733.6 447.3,735.0 C448.4,736.4 449.6,740.9 450.7,739.7 C451.8,738.6 453.1,734.0 454.1,728.1 C455.1,722.2 455.2,709.3 456.6,704.4 C458.0,699.5 460.4,700.2 462.5,698.5 C464.6,696.8 467.3,695.4 469.3,693.9 C471.3,692.4 472.7,692.2 474.4,689.2 C476.1,686.2 477.5,680.4 479.5,675.6 C481.5,670.8 484.1,664.4 486.3,660.3 C488.6,656.2 490.2,653.2 493.0,651.0 C495.8,648.8 500.9,647.7 503.2,647.1 C505.5,646.5 505.4,646.0 506.8,647.6 C508.2,649.2 510.2,652.6 511.9,657.0 C513.6,661.4 515.2,668.1 516.9,674.0 C518.6,679.9 520.4,687.0 522.0,692.5 C523.6,698.0 524.6,704.2 526.3,707.0 C528.0,709.8 529.2,709.2 532.2,709.5 C535.2,709.8 540.4,708.5 544.1,708.6 C547.8,708.7 552.1,711.0 554.2,710.3 C556.3,709.6 555.9,707.9 556.8,704.4 C557.6,700.9 558.0,693.0 559.3,689.2 C560.6,685.4 562.7,683.4 564.4,681.5 C566.1,679.6 567.7,680.5 569.5,678.1 C571.3,675.7 573.9,668.8 575.4,667.1 C576.9,665.4 577.8,665.7 578.8,668.0 C579.8,670.3 580.4,675.8 581.4,680.7 C582.4,685.6 583.0,692.5 584.7,697.6 C586.4,702.7 589.2,706.1 591.5,711.2 C593.8,716.3 596.0,721.6 598.3,728.1 C600.6,734.6 603.1,743.7 605.1,750.2 C607.1,756.7 608.2,763.6 610.2,767.1 C612.2,770.6 614.9,771.4 617.0,771.4 C619.1,771.4 620.9,770.9 622.9,767.1 C624.9,763.3 626.7,759.0 628.8,748.5 C630.9,738.0 633.6,715.7 635.6,704.4 C637.6,693.1 638.7,686.2 640.7,680.7 C642.7,675.2 645.5,672.2 647.5,671.4 C649.5,670.5 650.5,671.5 652.5,675.6 C654.5,679.7 656.8,688.9 659.3,696.0 C661.8,703.1 665.2,712.1 667.8,718.0 C670.3,723.9 672.6,726.4 674.6,731.5 C676.6,736.6 678.0,744.4 679.7,748.5 C681.4,752.6 683.0,755.0 684.7,756.1 C686.4,757.2 688.1,755.9 689.8,755.3 C691.5,754.7 693.8,752.4 695.1,752.7 C696.4,753.0 697.0,754.6 697.6,757.0 C698.2,759.4 698.4,764.0 698.8,767.1 C699.2,770.2 699.6,771.4 700.2,775.6 C700.9,779.8 701.6,790.8 702.7,792.5 C703.8,794.2 705.6,788.6 707.0,785.8 C708.4,783.0 709.9,778.7 711.2,775.6 C712.5,772.5 713.6,769.4 714.6,767.1 C715.6,764.8 715.6,763.5 717.1,762.0 C718.6,760.5 721.9,758.9 723.9,758.3 C725.9,757.7 727.0,758.0 729.0,758.3 C731.0,758.6 734.1,760.5 735.8,760.3 C737.5,760.1 737.8,758.5 739.2,757.0 C740.6,755.5 742.0,753.0 744.2,751.0 C746.5,749.0 750.4,746.9 752.7,745.1 C755.0,743.3 755.5,741.1 757.8,740.0 C760.1,738.9 764.2,739.6 766.3,738.6 C768.4,737.6 769.1,737.2 770.5,734.1 C771.9,731.0 772.9,724.9 774.7,719.7 C776.5,714.5 779.5,707.2 781.5,702.7 C783.5,698.2 784.1,696.6 786.6,692.5 C789.1,688.4 793.4,680.6 796.8,678.1 C800.2,675.6 803.9,676.7 807.0,677.3 C810.1,677.9 813.1,680.2 815.4,681.5 C817.6,682.8 818.8,682.5 820.5,684.9 C822.2,687.3 823.9,690.9 825.6,695.9 C827.3,700.9 828.4,707.8 830.7,714.6 C833.0,721.4 836.7,731.0 839.2,736.6 C841.7,742.2 843.6,745.2 845.9,748.5 C848.1,751.8 850.7,757.2 852.7,756.6 C854.7,756.0 856.1,747.5 857.8,745.1 C859.5,742.8 860.9,743.2 862.9,742.5 C864.9,741.8 867.7,744.0 869.7,740.8 C871.7,737.5 873.0,727.4 874.7,723.0 C876.4,718.6 878.4,717.1 880.0,714.6 C881.6,712.1 883.1,713.2 884.2,707.8 C885.3,702.4 885.9,691.7 886.8,682.4 C887.6,673.1 888.4,657.6 889.3,651.9 C890.1,646.2 889.8,647.8 891.9,648.1 C894.0,648.4 898.3,651.4 902.0,653.6 C905.7,655.8 910.8,658.4 913.9,661.2 C917.0,664.0 918.7,668.7 920.7,670.5 C922.7,672.3 923.8,672.5 925.8,671.9 C927.8,671.3 930.2,669.6 932.5,667.1 C934.8,664.6 937.0,659.1 939.3,657.0 C941.6,654.9 944.1,654.4 946.1,654.4 C948.1,654.4 949.7,656.0 951.2,657.0 C952.8,658.0 952.9,660.2 955.4,660.7 C957.9,661.2 963.1,657.8 966.4,660.0 C969.6,662.2 972.6,669.3 974.9,673.9 C977.2,678.5 978.6,681.9 980.0,687.5 C981.4,693.1 982.4,704.0 983.4,707.8 C984.4,711.6 983.6,710.0 985.9,710.3 C988.1,710.6 994.5,712.2 996.9,709.8 C999.3,707.4 998.9,699.9 1000.3,695.9 C1001.7,691.9 1003.7,688.9 1005.4,685.8 C1007.1,682.7 1009.1,677.6 1010.5,677.3 C1011.9,677.0 1013.0,679.0 1013.9,684.1 C1014.8,689.2 1014.8,699.9 1015.6,707.8 C1016.5,715.7 1017.3,726.3 1019.0,731.5 C1020.7,736.7 1023.5,738.9 1025.8,739.2 C1028.0,739.5 1030.5,737.0 1032.5,733.2 C1034.5,729.4 1035.9,721.9 1037.6,716.3 C1039.3,710.6 1040.7,703.3 1042.7,699.3 C1044.7,695.3 1047.0,693.4 1049.5,692.5 C1052.0,691.6 1055.5,693.4 1058.0,694.2 C1060.5,695.0 1061.9,696.8 1064.7,697.3 C1067.5,697.8 1071.7,697.0 1075.1,697.3 C1078.5,697.6 1082.8,698.4 1085.3,699.3 C1087.8,700.2 1088.8,700.2 1090.3,702.7 C1091.8,705.2 1093.2,710.4 1094.6,714.6 C1096.0,718.8 1097.2,724.2 1098.8,728.1 C1100.3,732.0 1101.6,737.2 1103.9,738.3 C1106.2,739.4 1109.6,736.0 1112.4,734.9 C1115.2,733.8 1118.0,732.3 1120.8,731.9 C1123.6,731.5 1126.5,732.9 1129.3,732.4 C1132.1,731.9 1135.0,729.4 1137.8,729.0 C1140.6,728.6 1144.0,731.2 1146.3,730.2 C1148.6,729.2 1150.0,726.2 1151.4,723.0 C1152.8,719.8 1153.6,715.4 1154.7,711.2 C1155.8,707.0 1156.8,700.0 1158.1,697.6 C1159.4,695.2 1160.7,695.9 1162.4,696.8 C1164.1,697.6 1166.5,700.5 1168.3,702.7 C1170.1,704.9 1171.7,708.6 1173.4,709.8 C1175.1,711.0 1176.5,710.0 1178.5,709.8 C1180.5,709.6 1183.6,707.2 1185.3,708.6 C1187.0,710.0 1187.5,713.6 1188.6,718.0 C1189.7,722.4 1190.6,730.9 1192.0,734.9 C1193.4,738.9 1194.3,740.6 1197.1,741.7 C1199.9,742.8 1206.6,742.8 1209.0,741.7 C1211.4,740.6 1210.7,739.1 1211.5,734.9 C1212.3,730.7 1212.8,720.1 1214.1,716.3 C1215.4,712.5 1217.0,712.7 1219.2,712.0 C1221.5,711.3 1225.1,710.7 1227.6,712.0 C1230.1,713.3 1232.4,716.9 1234.4,719.7 C1236.4,722.5 1237.2,726.5 1239.5,729.0 C1241.8,731.5 1245.5,733.1 1248.0,734.9 C1250.5,736.7 1252.7,739.0 1254.7,740.0 C1256.7,741.0 1256.8,740.4 1260.0,740.8 C1263.2,741.2 1269.6,741.2 1273.6,742.5 C1277.5,743.8 1280.3,746.1 1283.7,748.5 C1287.1,750.9 1290.8,754.1 1293.9,756.9 C1297.0,759.7 1300.6,764.5 1302.4,765.4 C1304.2,766.2 1304.1,764.2 1304.9,762.0 C1305.8,759.8 1306.2,755.6 1307.5,751.9 C1308.8,748.2 1310.8,742.4 1312.5,740.0 C1314.2,737.6 1315.3,737.5 1317.6,737.5 C1319.9,737.5 1324.3,737.9 1326.1,739.7 C1327.9,741.5 1327.9,743.9 1328.6,748.5 C1329.3,753.1 1329.7,760.6 1330.3,767.1 C1330.9,773.6 1331.3,782.9 1332.0,787.5 C1332.7,792.1 1333.0,794.6 1334.6,794.6 C1336.2,794.6 1339.4,790.7 1341.4,787.5 C1343.4,784.3 1345.0,779.0 1346.4,775.6 C1347.8,772.2 1348.1,768.8 1349.8,767.1 C1351.5,765.4 1354.6,766.8 1356.6,765.4 C1358.6,764.0 1360.3,760.9 1361.7,758.6 C1363.1,756.4 1362.8,753.0 1365.1,751.9 C1367.4,750.8 1372.8,751.4 1375.3,752.2 C1377.8,753.0 1378.3,756.1 1380.3,756.9 C1382.3,757.7 1384.5,758.0 1387.1,756.9 C1389.6,755.8 1392.8,753.6 1395.6,750.2 C1398.4,746.8 1401.3,742.0 1404.1,736.6 C1406.9,731.2 1409.7,723.9 1412.5,718.0 C1415.3,712.1 1418.2,705.8 1421.0,701.0 C1423.8,696.2 1427.2,693.2 1429.5,689.2 C1431.8,685.2 1433.2,679.4 1434.6,677.3 C1436.0,675.2 1436.3,676.1 1438.0,676.4 C1439.7,676.7 1442.7,678.9 1444.7,679.0 C1446.7,679.1 1448.0,678.3 1450.0,677.3 C1452.0,676.3 1454.8,673.9 1456.8,673.0 C1458.8,672.1 1460.5,671.5 1461.9,672.2 C1463.3,672.9 1464.2,675.2 1465.3,677.3 C1466.4,679.4 1467.2,682.9 1468.6,684.9 C1470.0,686.9 1470.6,688.5 1473.7,689.2 C1476.8,689.9 1483.9,689.9 1487.3,689.2 C1490.7,688.5 1492.0,686.1 1494.1,684.9 C1496.2,683.7 1497.8,682.1 1500.0,682.0 C1502.2,681.9 1505.2,684.2 1507.6,684.4 C1510.0,684.6 1512.4,684.1 1514.4,683.2 C1516.4,682.3 1517.8,680.3 1519.5,679.0 C1521.2,677.7 1522.3,676.2 1524.6,675.6 C1526.9,675.0 1530.8,674.7 1533.1,675.3 C1535.3,675.9 1536.1,677.8 1538.1,679.0 C1540.1,680.2 1542.9,680.7 1544.9,682.4 C1546.9,684.1 1548.3,686.1 1550.0,689.2 C1551.7,692.3 1553.4,697.0 1555.1,701.0 C1556.8,705.0 1558.5,710.1 1560.2,712.9 C1561.9,715.7 1563.6,716.6 1565.3,717.6 C1567.0,718.6 1568.6,717.9 1570.3,718.8 C1572.0,719.7 1573.7,721.2 1575.4,723.0 C1577.1,724.8 1579.5,728.4 1580.3,729.5 L1580.3,768 L126.3,768 Z" fill="none" stroke="#52a33a" stroke-width="1.2" clip-path="url(#up)"/>
<path d="M126.3,807.0 C128.1,804.8 134.1,796.8 137.0,794.0 C139.9,791.2 141.3,790.8 143.7,790.0 C146.1,789.2 149.4,790.3 151.4,789.0 C153.4,787.7 153.8,783.7 155.6,782.0 C157.4,780.3 160.2,779.9 162.4,779.0 C164.6,778.1 166.2,778.1 169.0,776.4 C171.8,774.7 177.3,770.3 179.3,768.8 C181.0,767.3 179.3,767.7 181.0,767.5 C183.0,767.3 188.6,766.3 191.2,767.5 C193.8,768.7 194.3,773.9 196.3,774.7 C198.3,775.5 199.9,772.8 203.0,772.2 C206.1,771.7 212.2,772.2 215.0,771.4 C217.8,770.6 217.5,769.9 220.0,767.5 C222.5,765.1 227.4,759.6 230.2,757.0 C233.0,754.4 235.0,754.2 237.0,751.9 C239.0,749.6 239.8,747.6 242.0,743.4 C244.2,739.1 248.2,731.2 250.5,726.4 C252.8,721.6 254.2,718.5 255.6,714.6 C257.0,710.7 257.7,705.7 259.0,702.7 C260.3,699.7 261.8,697.9 263.2,696.8 C264.6,695.7 265.9,697.0 267.5,696.0 C269.1,695.0 270.5,693.6 272.5,690.8 C274.5,688.0 277.6,682.1 279.3,679.0 C281.0,675.9 279.9,673.4 282.7,672.2 C285.5,671.0 292.9,671.4 296.3,671.7 C299.7,672.0 300.2,672.4 303.0,673.9 C305.8,675.4 310.8,678.4 313.2,680.7 C315.6,683.0 316.5,685.0 317.5,687.5 C318.5,690.0 318.7,692.3 319.3,696.0 C319.9,699.7 320.1,706.5 321.0,709.5 C321.9,712.5 322.8,714.1 324.4,714.2 C325.9,714.3 328.5,713.3 330.3,710.3 C332.1,707.3 333.7,702.0 335.4,696.0 C337.1,690.0 338.5,680.5 340.5,674.0 C342.5,667.5 345.1,660.8 347.3,657.0 C349.6,653.2 351.5,652.3 354.0,651.0 C356.5,649.7 358.7,649.6 362.5,649.3 C366.3,649.0 374.0,648.3 377.0,649.3 C380.0,650.3 379.3,652.3 380.3,655.3 C381.3,658.2 381.9,661.1 382.9,667.0 C383.9,672.9 384.9,682.9 386.3,690.8 C387.7,698.7 390.0,710.1 391.4,714.6 C392.8,719.1 392.9,717.2 394.7,717.6 C396.5,718.0 400.4,716.2 402.4,717.1 C404.4,718.0 405.3,720.9 406.6,723.0 C407.9,725.1 408.0,728.2 410.0,729.8 C412.0,731.4 416.4,731.3 418.5,732.4 C420.6,733.5 421.3,735.3 422.7,736.6 C424.1,737.9 425.2,740.9 427.0,740.3 C428.8,739.7 430.9,734.4 433.7,732.9 C436.5,731.4 441.6,731.1 443.9,731.5 C446.2,731.9 446.2,733.6 447.3,735.0 C448.4,736.4 449.6,740.9 450.7,739.7 C451.8,738.6 453.1,734.0 454.1,728.1 C455.1,722.2 455.2,709.3 456.6,704.4 C458.0,699.5 460.4,700.2 462.5,698.5 C464.6,696.8 467.3,695.4 469.3,693.9 C471.3,692.4 472.7,692.2 474.4,689.2 C476.1,686.2 477.5,680.4 479.5,675.6 C481.5,670.8 484.1,664.4 486.3,660.3 C488.6,656.2 490.2,653.2 493.0,651.0 C495.8,648.8 500.9,647.7 503.2,647.1 C505.5,646.5 505.4,646.0 506.8,647.6 C508.2,649.2 510.2,652.6 511.9,657.0 C513.6,661.4 515.2,668.1 516.9,674.0 C518.6,679.9 520.4,687.0 522.0,692.5 C523.6,698.0 524.6,704.2 526.3,707.0 C528.0,709.8 529.2,709.2 532.2,709.5 C535.2,709.8 540.4,708.5 544.1,708.6 C547.8,708.7 552.1,711.0 554.2,710.3 C556.3,709.6 555.9,707.9 556.8,704.4 C557.6,700.9 558.0,693.0 559.3,689.2 C560.6,685.4 562.7,683.4 564.4,681.5 C566.1,679.6 567.7,680.5 569.5,678.1 C571.3,675.7 573.9,668.8 575.4,667.1 C576.9,665.4 577.8,665.7 578.8,668.0 C579.8,670.3 580.4,675.8 581.4,680.7 C582.4,685.6 583.0,692.5 584.7,697.6 C586.4,702.7 589.2,706.1 591.5,711.2 C593.8,716.3 596.0,721.6 598.3,728.1 C600.6,734.6 603.1,743.7 605.1,750.2 C607.1,756.7 608.2,763.6 610.2,767.1 C612.2,770.6 614.9,771.4 617.0,771.4 C619.1,771.4 620.9,770.9 622.9,767.1 C624.9,763.3 626.7,759.0 628.8,748.5 C630.9,738.0 633.6,715.7 635.6,704.4 C637.6,693.1 638.7,686.2 640.7,680.7 C642.7,675.2 645.5,672.2 647.5,671.4 C649.5,670.5 650.5,671.5 652.5,675.6 C654.5,679.7 656.8,688.9 659.3,696.0 C661.8,703.1 665.2,712.1 667.8,718.0 C670.3,723.9 672.6,726.4 674.6,731.5 C676.6,736.6 678.0,744.4 679.7,748.5 C681.4,752.6 683.0,755.0 684.7,756.1 C686.4,757.2 688.1,755.9 689.8,755.3 C691.5,754.7 693.8,752.4 695.1,752.7 C696.4,753.0 697.0,754.6 697.6,757.0 C698.2,759.4 698.4,764.0 698.8,767.1 C699.2,770.2 699.6,771.4 700.2,775.6 C700.9,779.8 701.6,790.8 702.7,792.5 C703.8,794.2 705.6,788.6 707.0,785.8 C708.4,783.0 709.9,778.7 711.2,775.6 C712.5,772.5 713.6,769.4 714.6,767.1 C715.6,764.8 715.6,763.5 717.1,762.0 C718.6,760.5 721.9,758.9 723.9,758.3 C725.9,757.7 727.0,758.0 729.0,758.3 C731.0,758.6 734.1,760.5 735.8,760.3 C737.5,760.1 737.8,758.5 739.2,757.0 C740.6,755.5 742.0,753.0 744.2,751.0 C746.5,749.0 750.4,746.9 752.7,745.1 C755.0,743.3 755.5,741.1 757.8,740.0 C760.1,738.9 764.2,739.6 766.3,738.6 C768.4,737.6 769.1,737.2 770.5,734.1 C771.9,731.0 772.9,724.9 774.7,719.7 C776.5,714.5 779.5,707.2 781.5,702.7 C783.5,698.2 784.1,696.6 786.6,692.5 C789.1,688.4 793.4,680.6 796.8,678.1 C800.2,675.6 803.9,676.7 807.0,677.3 C810.1,677.9 813.1,680.2 815.4,681.5 C817.6,682.8 818.8,682.5 820.5,684.9 C822.2,687.3 823.9,690.9 825.6,695.9 C827.3,700.9 828.4,707.8 830.7,714.6 C833.0,721.4 836.7,731.0 839.2,736.6 C841.7,742.2 843.6,745.2 845.9,748.5 C848.1,751.8 850.7,757.2 852.7,756.6 C854.7,756.0 856.1,747.5 857.8,745.1 C859.5,742.8 860.9,743.2 862.9,742.5 C864.9,741.8 867.7,744.0 869.7,740.8 C871.7,737.5 873.0,727.4 874.7,723.0 C876.4,718.6 878.4,717.1 880.0,714.6 C881.6,712.1 883.1,713.2 884.2,707.8 C885.3,702.4 885.9,691.7 886.8,682.4 C887.6,673.1 888.4,657.6 889.3,651.9 C890.1,646.2 889.8,647.8 891.9,648.1 C894.0,648.4 898.3,651.4 902.0,653.6 C905.7,655.8 910.8,658.4 913.9,661.2 C917.0,664.0 918.7,668.7 920.7,670.5 C922.7,672.3 923.8,672.5 925.8,671.9 C927.8,671.3 930.2,669.6 932.5,667.1 C934.8,664.6 937.0,659.1 939.3,657.0 C941.6,654.9 944.1,654.4 946.1,654.4 C948.1,654.4 949.7,656.0 951.2,657.0 C952.8,658.0 952.9,660.2 955.4,660.7 C957.9,661.2 963.1,657.8 966.4,660.0 C969.6,662.2 972.6,669.3 974.9,673.9 C977.2,678.5 978.6,681.9 980.0,687.5 C981.4,693.1 982.4,704.0 983.4,707.8 C984.4,711.6 983.6,710.0 985.9,710.3 C988.1,710.6 994.5,712.2 996.9,709.8 C999.3,707.4 998.9,699.9 1000.3,695.9 C1001.7,691.9 1003.7,688.9 1005.4,685.8 C1007.1,682.7 1009.1,677.6 1010.5,677.3 C1011.9,677.0 1013.0,679.0 1013.9,684.1 C1014.8,689.2 1014.8,699.9 1015.6,707.8 C1016.5,715.7 1017.3,726.3 1019.0,731.5 C1020.7,736.7 1023.5,738.9 1025.8,739.2 C1028.0,739.5 1030.5,737.0 1032.5,733.2 C1034.5,729.4 1035.9,721.9 1037.6,716.3 C1039.3,710.6 1040.7,703.3 1042.7,699.3 C1044.7,695.3 1047.0,693.4 1049.5,692.5 C1052.0,691.6 1055.5,693.4 1058.0,694.2 C1060.5,695.0 1061.9,696.8 1064.7,697.3 C1067.5,697.8 1071.7,697.0 1075.1,697.3 C1078.5,697.6 1082.8,698.4 1085.3,699.3 C1087.8,700.2 1088.8,700.2 1090.3,702.7 C1091.8,705.2 1093.2,710.4 1094.6,714.6 C1096.0,718.8 1097.2,724.2 1098.8,728.1 C1100.3,732.0 1101.6,737.2 1103.9,738.3 C1106.2,739.4 1109.6,736.0 1112.4,734.9 C1115.2,733.8 1118.0,732.3 1120.8,731.9 C1123.6,731.5 1126.5,732.9 1129.3,732.4 C1132.1,731.9 1135.0,729.4 1137.8,729.0 C1140.6,728.6 1144.0,731.2 1146.3,730.2 C1148.6,729.2 1150.0,726.2 1151.4,723.0 C1152.8,719.8 1153.6,715.4 1154.7,711.2 C1155.8,707.0 1156.8,700.0 1158.1,697.6 C1159.4,695.2 1160.7,695.9 1162.4,696.8 C1164.1,697.6 1166.5,700.5 1168.3,702.7 C1170.1,704.9 1171.7,708.6 1173.4,709.8 C1175.1,711.0 1176.5,710.0 1178.5,709.8 C1180.5,709.6 1183.6,707.2 1185.3,708.6 C1187.0,710.0 1187.5,713.6 1188.6,718.0 C1189.7,722.4 1190.6,730.9 1192.0,734.9 C1193.4,738.9 1194.3,740.6 1197.1,741.7 C1199.9,742.8 1206.6,742.8 1209.0,741.7 C1211.4,740.6 1210.7,739.1 1211.5,734.9 C1212.3,730.7 1212.8,720.1 1214.1,716.3 C1215.4,712.5 1217.0,712.7 1219.2,712.0 C1221.5,711.3 1225.1,710.7 1227.6,712.0 C1230.1,713.3 1232.4,716.9 1234.4,719.7 C1236.4,722.5 1237.2,726.5 1239.5,729.0 C1241.8,731.5 1245.5,733.1 1248.0,734.9 C1250.5,736.7 1252.7,739.0 1254.7,740.0 C1256.7,741.0 1256.8,740.4 1260.0,740.8 C1263.2,741.2 1269.6,741.2 1273.6,742.5 C1277.5,743.8 1280.3,746.1 1283.7,748.5 C1287.1,750.9 1290.8,754.1 1293.9,756.9 C1297.0,759.7 1300.6,764.5 1302.4,765.4 C1304.2,766.2 1304.1,764.2 1304.9,762.0 C1305.8,759.8 1306.2,755.6 1307.5,751.9 C1308.8,748.2 1310.8,742.4 1312.5,740.0 C1314.2,737.6 1315.3,737.5 1317.6,737.5 C1319.9,737.5 1324.3,737.9 1326.1,739.7 C1327.9,741.5 1327.9,743.9 1328.6,748.5 C1329.3,753.1 1329.7,760.6 1330.3,767.1 C1330.9,773.6 1331.3,782.9 1332.0,787.5 C1332.7,792.1 1333.0,794.6 1334.6,794.6 C1336.2,794.6 1339.4,790.7 1341.4,787.5 C1343.4,784.3 1345.0,779.0 1346.4,775.6 C1347.8,772.2 1348.1,768.8 1349.8,767.1 C1351.5,765.4 1354.6,766.8 1356.6,765.4 C1358.6,764.0 1360.3,760.9 1361.7,758.6 C1363.1,756.4 1362.8,753.0 1365.1,751.9 C1367.4,750.8 1372.8,751.4 1375.3,752.2 C1377.8,753.0 1378.3,756.1 1380.3,756.9 C1382.3,757.7 1384.5,758.0 1387.1,756.9 C1389.6,755.8 1392.8,753.6 1395.6,750.2 C1398.4,746.8 1401.3,742.0 1404.1,736.6 C1406.9,731.2 1409.7,723.9 1412.5,718.0 C1415.3,712.1 1418.2,705.8 1421.0,701.0 C1423.8,696.2 1427.2,693.2 1429.5,689.2 C1431.8,685.2 1433.2,679.4 1434.6,677.3 C1436.0,675.2 1436.3,676.1 1438.0,676.4 C1439.7,676.7 1442.7,678.9 1444.7,679.0 C1446.7,679.1 1448.0,678.3 1450.0,677.3 C1452.0,676.3 1454.8,673.9 1456.8,673.0 C1458.8,672.1 1460.5,671.5 1461.9,672.2 C1463.3,672.9 1464.2,675.2 1465.3,677.3 C1466.4,679.4 1467.2,682.9 1468.6,684.9 C1470.0,686.9 1470.6,688.5 1473.7,689.2 C1476.8,689.9 1483.9,689.9 1487.3,689.2 C1490.7,688.5 1492.0,686.1 1494.1,684.9 C1496.2,683.7 1497.8,682.1 1500.0,682.0 C1502.2,681.9 1505.2,684.2 1507.6,684.4 C1510.0,684.6 1512.4,684.1 1514.4,683.2 C1516.4,682.3 1517.8,680.3 1519.5,679.0 C1521.2,677.7 1522.3,676.2 1524.6,675.6 C1526.9,675.0 1530.8,674.7 1533.1,675.3 C1535.3,675.9 1536.1,677.8 1538.1,679.0 C1540.1,680.2 1542.9,680.7 1544.9,682.4 C1546.9,684.1 1548.3,686.1 1550.0,689.2 C1551.7,692.3 1553.4,697.0 1555.1,701.0 C1556.8,705.0 1558.5,710.1 1560.2,712.9 C1561.9,715.7 1563.6,716.6 1565.3,717.6 C1567.0,718.6 1568.6,717.9 1570.3,718.8 C1572.0,719.7 1573.7,721.2 1575.4,723.0 C1577.1,724.8 1579.5,728.4 1580.3,729.5 L1580.3,768 L126.3,768 Z" fill="none" stroke="#c0434a" stroke-width="1.2" clip-path="url(#dn)"/>
<path d="M1854.2,768 L1878.9,768 L1878.9,772.8 C1876,773.5 1874,775 1872.5,777.5 C1869,783 1866,791.4 1863.6,791.4 C1861,791.4 1859,784 1857,781 L1854.2,781 Z" fill="#a3353a"/>
<line x1="178.3" y1="768" x2="178.3" y2="774" stroke="#1a1c22" stroke-width="1"/>
<line x1="241.5" y1="768" x2="241.5" y2="774" stroke="#1a1c22" stroke-width="1"/>
<line x1="304.6" y1="768" x2="304.6" y2="774" stroke="#1a1c22" stroke-width="1"/>
<line x1="367.8" y1="768" x2="367.8" y2="774" stroke="#1a1c22" stroke-width="1"/>
<line x1="430.9" y1="768" x2="430.9" y2="774" stroke="#1a1c22" stroke-width="1"/>
<line x1="494.1" y1="768" x2="494.1" y2="774" stroke="#1a1c22" stroke-width="1"/>
<line x1="557.2" y1="768" x2="557.2" y2="774" stroke="#1a1c22" stroke-width="1"/>
<line x1="620.4" y1="768" x2="620.4" y2="774" stroke="#1a1c22" stroke-width="1"/>
<line x1="683.6" y1="768" x2="683.6" y2="774" stroke="#1a1c22" stroke-width="1"/>
<line x1="746.7" y1="768" x2="746.7" y2="774" stroke="#1a1c22" stroke-width="1"/>
<line x1="809.9" y1="768" x2="809.9" y2="774" stroke="#1a1c22" stroke-width="1"/>
<line x1="873.0" y1="768" x2="873.0" y2="774" stroke="#1a1c22" stroke-width="1"/>
<line x1="936.1" y1="768" x2="936.1" y2="774" stroke="#1a1c22" stroke-width="1"/>
<line x1="999.3" y1="768" x2="999.3" y2="774" stroke="#1a1c22" stroke-width="1"/>
<line x1="1062.5" y1="768" x2="1062.5" y2="774" stroke="#1a1c22" stroke-width="1"/>
<line x1="1125.6" y1="768" x2="1125.6" y2="774" stroke="#1a1c22" stroke-width="1"/>
<line x1="1188.8" y1="768" x2="1188.8" y2="774" stroke="#1a1c22" stroke-width="1"/>
<line x1="1251.9" y1="768" x2="1251.9" y2="774" stroke="#1a1c22" stroke-width="1"/>
<line x1="1315.1" y1="768" x2="1315.1" y2="774" stroke="#1a1c22" stroke-width="1"/>
<line x1="1378.2" y1="768" x2="1378.2" y2="774" stroke="#1a1c22" stroke-width="1"/>
<line x1="1441.4" y1="768" x2="1441.4" y2="774" stroke="#1a1c22" stroke-width="1"/>
<line x1="1504.5" y1="768" x2="1504.5" y2="774" stroke="#1a1c22" stroke-width="1"/>
<line x1="1567.7" y1="768" x2="1567.7" y2="774" stroke="#1a1c22" stroke-width="1"/>
<line x1="1630.8" y1="768" x2="1630.8" y2="774" stroke="#1a1c22" stroke-width="1"/>
<line x1="1694.0" y1="768" x2="1694.0" y2="774" stroke="#1a1c22" stroke-width="1"/>
<line x1="1757.1" y1="768" x2="1757.1" y2="774" stroke="#1a1c22" stroke-width="1"/>
<line x1="1820.2" y1="768" x2="1820.2" y2="774" stroke="#1a1c22" stroke-width="1"/>
<path d="M126.3,781.5 C127.9,781.6 133.4,782.9 136.0,782.4 C138.6,781.9 139.0,779.0 142.0,778.6 C145.0,778.2 150.0,779.2 154.0,779.8 C158.0,780.4 159.3,781.9 165.8,782.0 C172.3,782.1 187.2,781.2 192.9,780.7 C198.6,780.2 196.4,780.1 199.7,779.3 C202.9,778.4 209.0,775.8 212.4,775.6 C215.8,775.4 217.0,777.7 220.0,778.1 C223.0,778.5 226.0,777.7 230.2,778.1 C234.4,778.5 241.7,780.6 245.4,780.7 C249.1,780.9 249.4,779.2 252.2,779.0 C255.0,778.8 259.6,779.0 262.4,779.3 C265.2,779.6 265.0,780.5 269.2,780.7 C273.4,780.9 282.7,779.8 287.8,780.3 C292.9,780.8 296.0,783.1 299.7,783.7 C303.4,784.3 306.1,784.7 309.8,784.0 C313.5,783.3 317.1,779.7 321.9,779.3 C326.7,778.9 334.9,781.4 338.8,781.5 C342.8,781.6 341.4,780.1 345.6,779.8 C349.8,779.5 360.0,779.6 364.2,779.8 C368.4,779.9 368.4,780.6 371.0,780.7 C373.6,780.8 376.9,781.0 379.5,780.3 C382.1,779.6 383.8,776.6 386.3,776.4 C388.8,776.2 390.5,778.7 394.7,779.0 C398.9,779.3 407.7,778.8 411.7,778.1 C415.7,777.4 415.9,775.5 418.5,774.7 C421.1,774.0 424.9,775.0 427.0,773.6 C429.1,772.2 429.9,768.2 431.2,766.3 C432.5,764.4 432.8,761.9 434.6,762.0 C436.4,762.1 440.4,766.2 442.2,766.8 C444.0,767.4 444.5,767.0 445.6,765.4 C446.7,763.8 447.0,758.1 449.0,757.0 C451.0,755.9 454.7,758.7 457.5,758.6 C460.3,758.5 463.4,756.3 465.9,756.6 C468.4,756.9 470.4,758.8 472.7,760.3 C475.0,761.8 476.7,764.6 479.5,765.4 C482.3,766.2 486.6,764.7 489.7,765.1 C492.8,765.5 495.9,768.5 498.1,768.0 C500.4,767.5 501.2,765.0 503.2,762.0 C505.2,759.0 507.4,752.0 510.2,750.2 C513.0,748.4 517.3,752.3 520.3,751.0 C523.3,749.7 525.5,744.0 528.0,742.5 C530.5,741.0 532.9,742.1 535.6,741.7 C538.3,741.3 541.0,740.2 544.1,740.0 C547.2,739.8 551.1,739.4 554.2,740.3 C557.3,741.1 560.2,743.7 562.7,745.1 C565.2,746.5 566.7,746.4 569.5,748.5 C572.3,750.6 576.0,755.6 579.7,757.8 C583.4,760.0 588.4,761.8 591.5,761.7 C594.6,761.6 595.8,757.5 598.3,757.0 C600.8,756.5 603.4,758.3 606.8,758.6 C610.2,758.9 614.9,760.9 618.6,758.6 C622.3,756.4 625.7,748.3 628.8,745.1 C631.9,741.9 635.0,740.1 637.3,739.2 C639.6,738.4 639.9,738.5 642.4,740.0 C644.9,741.5 649.4,746.7 652.5,748.5 C655.6,750.3 658.5,750.1 661.0,751.0 C663.5,751.9 665.0,751.5 667.8,753.6 C670.6,755.7 674.9,762.4 678.0,763.7 C681.1,765.1 682.1,762.1 686.4,761.7 C690.7,761.3 699.6,760.9 703.6,761.2 C707.6,761.5 708.0,762.7 710.3,763.7 C712.5,764.7 714.8,766.8 717.1,767.1 C719.4,767.4 721.1,766.3 723.9,765.4 C726.7,764.5 729.9,763.7 734.1,761.7 C738.3,759.7 745.1,754.5 749.3,753.6 C753.5,752.8 756.7,757.7 759.5,756.6 C762.3,755.5 763.2,748.9 766.3,746.8 C769.4,744.6 774.1,744.0 778.1,743.7 C782.1,743.4 785.8,745.4 790.0,745.1 C794.2,744.8 799.6,741.9 803.6,741.7 C807.6,741.5 811.2,744.7 813.7,743.7 C816.2,742.7 814.5,736.6 818.8,735.8 C823.0,734.9 833.6,739.5 839.2,738.6 C844.9,737.8 847.9,731.3 852.7,730.7 C857.5,730.1 864.6,737.3 868.0,734.9 C871.4,732.5 871.6,719.8 873.0,716.3 C874.4,712.8 874.7,712.6 876.4,713.7 C878.1,714.8 880.9,721.0 883.2,723.0 C885.5,725.0 887.6,725.9 890.2,725.6 C892.8,725.3 895.5,721.9 898.6,721.4 C901.7,720.9 905.8,723.3 908.8,722.7 C911.8,722.1 913.0,717.0 916.4,718.0 C919.8,719.0 924.0,727.0 929.2,728.5 C934.4,730.0 943.3,727.3 947.8,726.8 C952.3,726.3 953.8,726.3 956.3,725.6 C958.8,724.9 960.9,722.6 963.1,722.7 C965.4,722.8 967.3,724.6 969.8,726.4 C972.3,728.1 975.5,732.9 978.3,733.2 C981.1,733.5 983.7,728.6 986.8,728.1 C989.9,727.6 994.4,732.5 996.9,730.2 C999.4,728.0 999.5,717.6 1002.0,714.6 C1004.5,711.6 1009.1,712.6 1012.2,712.5 C1015.3,712.4 1018.2,712.5 1020.7,713.7 C1023.2,714.9 1024.4,719.4 1027.5,719.7 C1030.6,720.0 1035.6,717.0 1039.3,715.4 C1043.0,713.8 1045.3,709.4 1049.5,709.8 C1053.7,710.2 1060.4,717.1 1064.7,718.0 C1069.0,718.9 1071.1,714.3 1075.1,715.4 C1079.1,716.5 1084.9,722.4 1088.6,724.7 C1092.3,727.0 1094.3,727.3 1097.1,729.0 C1099.9,730.7 1102.8,735.0 1105.6,734.9 C1108.4,734.8 1111.6,729.3 1114.1,728.1 C1116.6,726.9 1118.3,727.4 1120.8,727.8 C1123.3,728.2 1126.8,731.1 1129.3,730.7 C1131.8,730.3 1133.3,726.2 1136.1,725.6 C1138.9,725.0 1143.8,727.4 1146.3,726.8 C1148.8,726.2 1149.2,722.8 1151.4,722.2 C1153.7,721.6 1157.3,722.3 1159.8,723.0 C1162.3,723.7 1163.5,725.8 1166.6,726.4 C1169.7,727.0 1175.4,727.1 1178.5,726.8 C1181.6,726.5 1182.8,723.7 1185.3,724.7 C1187.8,725.7 1191.2,731.1 1193.7,732.9 C1196.2,734.7 1197.7,735.0 1200.5,735.3 C1203.3,735.6 1207.0,733.0 1210.7,734.9 C1214.4,736.8 1217.7,744.3 1222.5,746.4 C1227.3,748.5 1235.0,748.3 1239.5,747.6 C1244.0,746.9 1244.0,743.0 1249.7,742.0 C1255.4,741.0 1267.1,741.4 1273.6,741.7 C1280.1,742.0 1284.0,743.0 1288.8,743.7 C1293.6,744.4 1299.3,746.8 1302.4,745.9 C1305.5,745.0 1305.2,739.8 1307.5,738.3 C1309.8,736.8 1312.8,736.6 1315.9,736.6 C1319.0,736.6 1323.0,738.2 1326.1,738.3 C1329.2,738.4 1329.2,737.2 1334.6,737.0 C1340.0,736.8 1353.2,737.5 1358.3,737.0 C1363.4,736.5 1362.5,734.0 1365.1,734.1 C1367.6,734.2 1370.5,736.8 1373.6,737.5 C1376.7,738.2 1381.2,736.0 1383.7,738.3 C1386.2,740.6 1387.4,749.5 1388.8,751.5 C1390.2,753.5 1389.7,752.7 1392.2,750.2 C1394.8,747.7 1400.7,739.2 1404.1,736.6 C1407.5,734.0 1408.8,736.6 1412.5,734.9 C1416.2,733.2 1422.1,727.9 1426.1,726.4 C1430.1,724.9 1432.1,725.6 1436.3,725.6 C1440.5,725.6 1447.5,725.7 1451.5,726.4 C1455.5,727.1 1457.4,729.6 1460.2,729.8 C1463.0,730.0 1464.6,727.8 1468.6,727.8 C1472.5,727.8 1478.5,729.0 1483.9,729.8 C1489.3,730.6 1495.6,731.7 1500.8,732.4 C1506.0,733.1 1511.3,734.5 1515.3,734.1 C1519.3,733.7 1521.6,730.6 1524.6,729.8 C1527.6,728.9 1530.6,728.6 1533.1,729.0 C1535.6,729.4 1536.1,731.7 1539.8,732.4 C1543.5,733.1 1550.3,733.4 1555.1,733.2 C1559.9,733.1 1564.4,732.1 1568.6,731.5 C1572.8,730.9 1578.3,729.8 1580.3,729.5" fill="none" stroke="#000000" stroke-opacity="0.35" stroke-width="4.6" stroke-linejoin="round"/>
<path d="M126.3,781.5 C127.9,781.6 133.4,782.9 136.0,782.4 C138.6,781.9 139.0,779.0 142.0,778.6 C145.0,778.2 150.0,779.2 154.0,779.8 C158.0,780.4 159.3,781.9 165.8,782.0 C172.3,782.1 187.2,781.2 192.9,780.7 C198.6,780.2 196.4,780.1 199.7,779.3 C202.9,778.4 209.0,775.8 212.4,775.6 C215.8,775.4 217.0,777.7 220.0,778.1 C223.0,778.5 226.0,777.7 230.2,778.1 C234.4,778.5 241.7,780.6 245.4,780.7 C249.1,780.9 249.4,779.2 252.2,779.0 C255.0,778.8 259.6,779.0 262.4,779.3 C265.2,779.6 265.0,780.5 269.2,780.7 C273.4,780.9 282.7,779.8 287.8,780.3 C292.9,780.8 296.0,783.1 299.7,783.7 C303.4,784.3 306.1,784.7 309.8,784.0 C313.5,783.3 317.1,779.7 321.9,779.3 C326.7,778.9 334.9,781.4 338.8,781.5 C342.8,781.6 341.4,780.1 345.6,779.8 C349.8,779.5 360.0,779.6 364.2,779.8 C368.4,779.9 368.4,780.6 371.0,780.7 C373.6,780.8 376.9,781.0 379.5,780.3 C382.1,779.6 383.8,776.6 386.3,776.4 C388.8,776.2 390.5,778.7 394.7,779.0 C398.9,779.3 407.7,778.8 411.7,778.1 C415.7,777.4 415.9,775.5 418.5,774.7 C421.1,774.0 424.9,775.0 427.0,773.6 C429.1,772.2 429.9,768.2 431.2,766.3 C432.5,764.4 432.8,761.9 434.6,762.0 C436.4,762.1 440.4,766.2 442.2,766.8 C444.0,767.4 444.5,767.0 445.6,765.4 C446.7,763.8 447.0,758.1 449.0,757.0 C451.0,755.9 454.7,758.7 457.5,758.6 C460.3,758.5 463.4,756.3 465.9,756.6 C468.4,756.9 470.4,758.8 472.7,760.3 C475.0,761.8 476.7,764.6 479.5,765.4 C482.3,766.2 486.6,764.7 489.7,765.1 C492.8,765.5 495.9,768.5 498.1,768.0 C500.4,767.5 501.2,765.0 503.2,762.0 C505.2,759.0 507.4,752.0 510.2,750.2 C513.0,748.4 517.3,752.3 520.3,751.0 C523.3,749.7 525.5,744.0 528.0,742.5 C530.5,741.0 532.9,742.1 535.6,741.7 C538.3,741.3 541.0,740.2 544.1,740.0 C547.2,739.8 551.1,739.4 554.2,740.3 C557.3,741.1 560.2,743.7 562.7,745.1 C565.2,746.5 566.7,746.4 569.5,748.5 C572.3,750.6 576.0,755.6 579.7,757.8 C583.4,760.0 588.4,761.8 591.5,761.7 C594.6,761.6 595.8,757.5 598.3,757.0 C600.8,756.5 603.4,758.3 606.8,758.6 C610.2,758.9 614.9,760.9 618.6,758.6 C622.3,756.4 625.7,748.3 628.8,745.1 C631.9,741.9 635.0,740.1 637.3,739.2 C639.6,738.4 639.9,738.5 642.4,740.0 C644.9,741.5 649.4,746.7 652.5,748.5 C655.6,750.3 658.5,750.1 661.0,751.0 C663.5,751.9 665.0,751.5 667.8,753.6 C670.6,755.7 674.9,762.4 678.0,763.7 C681.1,765.1 682.1,762.1 686.4,761.7 C690.7,761.3 699.6,760.9 703.6,761.2 C707.6,761.5 708.0,762.7 710.3,763.7 C712.5,764.7 714.8,766.8 717.1,767.1 C719.4,767.4 721.1,766.3 723.9,765.4 C726.7,764.5 729.9,763.7 734.1,761.7 C738.3,759.7 745.1,754.5 749.3,753.6 C753.5,752.8 756.7,757.7 759.5,756.6 C762.3,755.5 763.2,748.9 766.3,746.8 C769.4,744.6 774.1,744.0 778.1,743.7 C782.1,743.4 785.8,745.4 790.0,745.1 C794.2,744.8 799.6,741.9 803.6,741.7 C807.6,741.5 811.2,744.7 813.7,743.7 C816.2,742.7 814.5,736.6 818.8,735.8 C823.0,734.9 833.6,739.5 839.2,738.6 C844.9,737.8 847.9,731.3 852.7,730.7 C857.5,730.1 864.6,737.3 868.0,734.9 C871.4,732.5 871.6,719.8 873.0,716.3 C874.4,712.8 874.7,712.6 876.4,713.7 C878.1,714.8 880.9,721.0 883.2,723.0 C885.5,725.0 887.6,725.9 890.2,725.6 C892.8,725.3 895.5,721.9 898.6,721.4 C901.7,720.9 905.8,723.3 908.8,722.7 C911.8,722.1 913.0,717.0 916.4,718.0 C919.8,719.0 924.0,727.0 929.2,728.5 C934.4,730.0 943.3,727.3 947.8,726.8 C952.3,726.3 953.8,726.3 956.3,725.6 C958.8,724.9 960.9,722.6 963.1,722.7 C965.4,722.8 967.3,724.6 969.8,726.4 C972.3,728.1 975.5,732.9 978.3,733.2 C981.1,733.5 983.7,728.6 986.8,728.1 C989.9,727.6 994.4,732.5 996.9,730.2 C999.4,728.0 999.5,717.6 1002.0,714.6 C1004.5,711.6 1009.1,712.6 1012.2,712.5 C1015.3,712.4 1018.2,712.5 1020.7,713.7 C1023.2,714.9 1024.4,719.4 1027.5,719.7 C1030.6,720.0 1035.6,717.0 1039.3,715.4 C1043.0,713.8 1045.3,709.4 1049.5,709.8 C1053.7,710.2 1060.4,717.1 1064.7,718.0 C1069.0,718.9 1071.1,714.3 1075.1,715.4 C1079.1,716.5 1084.9,722.4 1088.6,724.7 C1092.3,727.0 1094.3,727.3 1097.1,729.0 C1099.9,730.7 1102.8,735.0 1105.6,734.9 C1108.4,734.8 1111.6,729.3 1114.1,728.1 C1116.6,726.9 1118.3,727.4 1120.8,727.8 C1123.3,728.2 1126.8,731.1 1129.3,730.7 C1131.8,730.3 1133.3,726.2 1136.1,725.6 C1138.9,725.0 1143.8,727.4 1146.3,726.8 C1148.8,726.2 1149.2,722.8 1151.4,722.2 C1153.7,721.6 1157.3,722.3 1159.8,723.0 C1162.3,723.7 1163.5,725.8 1166.6,726.4 C1169.7,727.0 1175.4,727.1 1178.5,726.8 C1181.6,726.5 1182.8,723.7 1185.3,724.7 C1187.8,725.7 1191.2,731.1 1193.7,732.9 C1196.2,734.7 1197.7,735.0 1200.5,735.3 C1203.3,735.6 1207.0,733.0 1210.7,734.9 C1214.4,736.8 1217.7,744.3 1222.5,746.4 C1227.3,748.5 1235.0,748.3 1239.5,747.6 C1244.0,746.9 1244.0,743.0 1249.7,742.0 C1255.4,741.0 1267.1,741.4 1273.6,741.7 C1280.1,742.0 1284.0,743.0 1288.8,743.7 C1293.6,744.4 1299.3,746.8 1302.4,745.9 C1305.5,745.0 1305.2,739.8 1307.5,738.3 C1309.8,736.8 1312.8,736.6 1315.9,736.6 C1319.0,736.6 1323.0,738.2 1326.1,738.3 C1329.2,738.4 1329.2,737.2 1334.6,737.0 C1340.0,736.8 1353.2,737.5 1358.3,737.0 C1363.4,736.5 1362.5,734.0 1365.1,734.1 C1367.6,734.2 1370.5,736.8 1373.6,737.5 C1376.7,738.2 1381.2,736.0 1383.7,738.3 C1386.2,740.6 1387.4,749.5 1388.8,751.5 C1390.2,753.5 1389.7,752.7 1392.2,750.2 C1394.8,747.7 1400.7,739.2 1404.1,736.6 C1407.5,734.0 1408.8,736.6 1412.5,734.9 C1416.2,733.2 1422.1,727.9 1426.1,726.4 C1430.1,724.9 1432.1,725.6 1436.3,725.6 C1440.5,725.6 1447.5,725.7 1451.5,726.4 C1455.5,727.1 1457.4,729.6 1460.2,729.8 C1463.0,730.0 1464.6,727.8 1468.6,727.8 C1472.5,727.8 1478.5,729.0 1483.9,729.8 C1489.3,730.6 1495.6,731.7 1500.8,732.4 C1506.0,733.1 1511.3,734.5 1515.3,734.1 C1519.3,733.7 1521.6,730.6 1524.6,729.8 C1527.6,728.9 1530.6,728.6 1533.1,729.0 C1535.6,729.4 1536.1,731.7 1539.8,732.4 C1543.5,733.1 1550.3,733.4 1555.1,733.2 C1559.9,733.1 1564.4,732.1 1568.6,731.5 C1572.8,730.9 1578.3,729.8 1580.3,729.5" fill="none" stroke="#ffffff" stroke-width="2.2" stroke-linejoin="round"/>
<path d="M1855,794.6 C1862,794 1868,794.5 1879,796.5" fill="none" stroke="#ffffff" stroke-width="2"/>
<line x1="122.6" y1="658" x2="1883" y2="658" stroke="#ffffff" stroke-opacity="0.68" stroke-width="2" stroke-dasharray="5.2,2.57"/>
<line x1="1879" y1="616.3" x2="1879" y2="878.5" stroke="#c0c0c0" stroke-width="1.5" stroke-dasharray="5.2,2.8"/>
<path d="M126.0,924.3 L128.6,924.1 L131.2,925.1 L133.9,924.2 L136.5,925.1 L139.1,924.9 L141.8,924.5 L144.4,925.4 L147.0,924.7 L150.0,921.5 L152.6,920.4 L155.2,920.0 L157.9,920.1 L160.5,920.4 L163.2,920.0 L165.9,921.0 L168.6,922.5 L171.3,924.0 L174.0,924.1 L176.6,923.7 L179.2,924.6 L181.9,922.7 L184.5,924.0 L187.1,922.9 L189.8,922.5 L192.4,922.3 L195.0,922.5 L198.0,923.8 L201.0,923.1 L204.0,924.3 L207.0,924.9 L211.5,929.2 L214.2,929.9 L216.9,929.5 L219.6,929.9 L222.3,930.6 L225.0,931.8 L227.5,931.7 L230.0,931.9 L232.5,932.7 L235.0,932.8 L237.5,932.9 L240.0,934.1 L242.5,934.5 L245.0,934.1 L247.5,935.2 L250.0,935.6 L252.5,936.8 L255.0,937.0 L258.0,937.0 L261.0,939.0 L264.0,938.2 L267.0,939.5 L270.0,939.1 L273.0,937.0 L276.0,936.6 L278.6,935.9 L281.2,937.2 L283.9,937.5 L286.5,937.3 L289.1,938.0 L291.8,937.2 L294.4,938.0 L297.0,938.0 L300.0,936.9 L303.0,935.7 L306.0,935.4 L309.0,935.3 L312.0,934.2 L315.0,934.2 L318.0,932.8 L321.0,934.4 L324.0,934.8 L327.0,935.8 L330.0,936.0 L333.0,933.4 L336.0,932.0 L339.0,930.9 L341.6,929.2 L344.1,929.5 L346.7,928.5 L349.3,927.9 L351.9,927.2 L354.4,928.0 L357.0,926.3 L359.6,926.5 L362.1,926.6 L364.7,927.4 L367.3,925.9 L369.9,926.5 L372.4,926.6 L375.0,927.1 L378.0,927.5 L381.0,928.1 L384.0,927.6 L387.0,928.3 L390.0,926.7 L393.0,926.2 L395.5,926.4 L398.0,925.0 L400.5,925.1 L403.0,925.2 L405.5,925.3 L408.0,925.8 L411.0,925.6 L414.0,924.6 L417.0,923.7 L420.0,925.7 L423.0,926.8 L426.0,928.3 L429.0,930.2 L431.5,929.5 L434.0,929.0 L436.5,929.0 L439.0,928.9 L441.5,927.6 L444.0,928.9 L447.0,929.2 L450.0,929.8 L453.0,930.1 L456.0,929.8 L459.0,929.8 L462.0,929.3 L465.0,930.2 L468.0,929.2 L471.0,935.2 L474.0,941.5 L476.5,942.1 L479.0,943.2 L481.5,943.4 L484.0,944.1 L486.5,945.1 L489.0,945.8 L492.0,944.4 L495.0,941.9 L498.0,941.5 L501.0,939.2 L503.5,937.6 L506.0,937.1 L508.5,936.5 L511.0,935.8 L513.5,934.6 L516.0,935.1 L519.0,937.6 L522.0,938.9 L525.0,938.2 L528.0,936.8 L531.0,936.0 L534.0,935.7 L537.0,936.3 L540.0,938.1 L543.0,937.6 L546.0,938.1 L549.0,940.3 L552.0,940.1 L555.0,939.9 L558.0,942.3 L561.0,943.0 L564.0,945.7 L567.0,945.9 L570.0,945.2 L573.0,944.4 L576.0,943.1 L578.6,943.1 L581.2,942.5 L583.9,943.4 L586.5,942.8 L589.1,943.1 L591.8,942.1 L594.4,941.7 L597.0,942.6 L599.5,942.6 L602.0,942.1 L604.5,941.8 L607.0,941.6 L609.5,941.2 L612.0,940.0 L614.6,940.7 L617.1,940.5 L619.7,940.0 L622.3,940.2 L624.9,940.7 L627.4,940.8 L630.0,941.7 L633.0,943.1 L636.0,943.1 L639.0,944.9 L642.0,945.9 L645.0,944.7 L648.0,942.5 L651.0,941.1 L654.0,940.0 L656.6,939.8 L659.1,939.8 L661.7,940.4 L664.3,940.8 L666.9,940.6 L669.4,939.8 L672.0,940.0 L674.6,940.2 L677.1,938.8 L679.7,939.7 L682.3,940.1 L684.9,939.7 L687.4,939.6 L690.0,939.0 L693.0,937.8 L696.0,938.3 L699.0,936.9 L702.0,937.1 L704.8,937.7 L707.5,937.0 L710.2,937.3 L713.0,938.6 L715.8,938.5 L718.5,937.8 L721.2,938.0 L724.0,938.4 L726.6,939.7 L729.2,939.6 L731.9,938.4 L734.5,939.6 L737.1,939.9 L739.8,939.3 L742.4,938.7 L745.0,939.1 L748.0,940.1 L751.0,941.7 L754.0,945.2 L756.6,944.4 L759.2,944.0 L761.9,944.5 L764.5,943.4 L767.1,943.9 L769.8,943.6 L772.4,942.3 L775.0,942.2 L777.7,942.3 L780.3,942.3 L783.0,943.1 L785.7,942.6 L788.3,943.0 L791.0,942.5 L793.7,944.0 L796.3,943.1 L799.0,943.4 L802.0,945.2 L805.0,947.2 L808.0,947.9 L810.6,949.6 L813.1,949.7 L815.7,950.6 L818.3,951.5 L820.9,951.4 L823.4,953.0 L826.0,953.4 L828.5,952.7 L831.0,953.7 L833.5,952.2 L836.0,952.4 L838.5,952.4 L841.0,951.7 L843.6,951.7 L846.2,952.4 L848.9,952.8 L851.5,953.6 L854.1,952.8 L856.8,954.0 L859.4,953.8 L862.0,954.2 L865.0,953.6 L868.0,951.6 L870.7,951.8 L873.3,952.3 L876.0,952.6 L878.7,951.9 L881.3,952.3 L884.0,952.2 L886.7,952.3 L889.3,952.7 L892.0,952.4 L894.6,952.0 L897.1,951.3 L899.7,951.6 L902.3,950.6 L904.9,950.4 L907.4,950.0 L910.0,948.2 L912.6,949.5 L915.1,950.9 L917.7,951.5 L920.3,951.0 L922.9,951.8 L925.4,953.1 L928.0,953.2 L930.6,953.5 L933.1,953.2 L935.7,954.3 L938.3,954.5 L940.9,954.7 L943.4,953.4 L946.0,954.4 L949.0,956.5 L952.0,957.9 L954.6,959.3 L957.1,959.5 L959.7,958.2 L962.3,959.6 L964.9,958.6 L967.4,958.9 L970.0,959.8 L972.6,959.6 L975.1,958.5 L977.7,959.0 L980.3,959.2 L982.9,959.0 L985.4,958.8 L988.0,959.1 L991.0,960.8 L994.0,960.6 L997.0,962.0 L1000.0,962.1 L1003.0,961.8 L1006.0,962.7 L1009.0,962.0 L1012.0,960.6 L1014.6,959.6 L1017.1,961.1 L1019.7,960.6 L1022.3,960.8 L1024.9,959.0 L1027.4,959.1 L1030.0,958.6 L1033.0,959.3 L1036.0,957.8 L1039.0,956.9 L1042.0,959.4 L1045.0,962.2 L1047.5,962.6 L1050.0,962.1 L1052.5,962.4 L1055.0,964.3 L1057.5,964.1 L1060.0,964.9 L1062.6,963.6 L1065.1,963.4 L1067.7,964.5 L1070.3,963.9 L1072.9,963.1 L1075.4,964.5 L1078.0,963.8 L1080.7,963.8 L1083.4,962.3 L1086.1,963.3 L1088.8,961.6 L1091.5,962.8 L1094.2,961.7 L1096.9,961.2 L1099.6,961.3 L1102.3,961.7 L1105.0,960.2 L1107.7,959.8 L1110.4,960.3 L1113.1,959.6 L1115.8,959.2 L1118.5,959.1 L1121.2,958.7 L1123.9,958.8 L1126.6,958.8 L1129.3,958.6 L1132.0,959.3 L1134.6,958.5 L1137.1,959.0 L1139.7,958.5 L1142.3,958.9 L1144.9,958.4 L1147.4,958.9 L1150.0,958.5 L1152.5,960.0 L1155.0,959.9 L1157.5,959.4 L1160.0,960.2 L1162.5,961.2 L1165.0,959.9 L1167.7,961.2 L1170.3,960.5 L1173.0,960.6 L1175.7,961.2 L1178.3,960.4 L1181.0,960.6 L1183.7,960.9 L1186.3,961.5 L1189.0,960.3 L1192.0,962.7 L1195.0,964.0 L1197.5,964.0 L1200.0,963.7 L1202.5,963.8 L1205.0,963.4 L1207.5,963.7 L1210.0,963.7 L1213.0,963.2 L1216.0,960.7 L1219.0,958.8 L1221.6,958.4 L1224.1,959.5 L1226.7,959.3 L1229.3,958.7 L1231.9,957.7 L1234.4,957.4 L1237.0,957.2 L1239.6,958.1 L1242.2,958.2 L1244.9,959.3 L1247.5,959.6 L1250.1,961.4 L1252.8,962.1 L1255.4,961.9 L1258.0,961.9 L1260.7,963.3 L1263.4,962.2 L1266.1,962.3 L1268.8,961.7 L1271.5,962.5 L1274.2,962.7 L1276.9,962.8 L1279.6,962.3 L1282.3,962.9 L1285.0,962.1 L1287.8,961.8 L1290.5,960.8 L1293.2,960.6 L1296.0,959.2 L1298.6,959.4 L1301.1,960.1 L1303.7,960.2 L1306.3,961.0 L1308.9,961.1 L1311.4,961.7 L1314.0,961.8 L1315.5,958.9 L1318.3,959.7 L1321.1,959.4 L1323.9,959.9 L1326.6,961.6 L1329.4,960.7 L1332.2,962.2 L1335.0,962.7 L1337.5,961.2 L1340.0,962.2 L1342.5,961.9 L1345.0,961.0 L1347.5,960.8 L1350.0,960.6 L1353.0,960.2 L1356.0,961.6 L1359.0,962.4 L1361.6,963.0 L1364.2,962.9 L1366.8,963.0 L1369.4,962.6 L1372.0,963.1 L1374.6,962.7 L1377.2,962.7 L1379.8,961.9 L1382.4,961.6 L1385.0,961.7 L1387.6,962.1 L1390.2,961.7 L1392.8,963.0 L1395.4,962.5 L1398.0,962.6 L1401.0,964.7 L1403.7,964.7 L1406.3,964.1 L1409.0,963.1 L1411.7,964.4 L1414.3,964.1 L1417.0,963.5 L1419.7,963.4 L1422.3,963.5 L1425.0,962.2 L1427.6,963.9 L1430.1,963.6 L1432.7,963.8 L1435.3,964.6 L1437.9,966.0 L1440.4,965.6 L1443.0,967.0 L1446.0,966.4 L1449.0,964.5 L1451.5,964.2 L1454.1,964.4 L1456.7,964.7 L1459.2,964.8 L1461.8,964.5 L1464.3,964.5 L1466.8,963.4 L1469.4,963.5 L1472.0,963.7 L1474.5,964.5 L1477.0,963.7 L1479.6,964.1 L1482.2,963.0 L1484.7,963.1 L1487.2,963.4 L1489.8,964.1 L1492.3,964.1 L1494.9,964.0 L1497.5,963.3 L1500.0,963.6 L1502.6,963.9 L1505.1,964.2 L1507.7,963.9 L1510.3,965.7 L1512.9,964.8 L1515.4,966.5 L1518.0,966.8 L1520.6,965.0 L1523.1,965.7 L1525.7,966.3 L1528.2,966.5 L1530.8,965.5 L1533.3,965.1 L1535.9,964.9 L1538.4,966.1 L1541.0,964.7 L1543.6,965.3 L1546.1,964.4 L1548.7,965.0 L1551.2,965.7 L1553.8,964.1 L1556.3,965.2 L1558.9,964.6 L1561.4,965.2 L1564.0,964.8 L1566.6,963.8 L1569.1,964.9 L1571.7,964.1 L1574.2,963.2 L1576.8,963.1 L1579.3,963.9 L1581.9,963.7 L1584.4,963.3 L1587.0,963.0 L1590.0,964.2 L1593.0,965.1 L1595.5,966.0 L1598.1,964.4 L1600.6,965.7 L1603.1,965.8 L1605.6,964.5 L1608.2,965.9 L1610.7,965.5 L1613.2,965.7 L1615.7,964.6 L1618.3,964.7 L1620.8,964.7 L1623.3,965.7 L1625.8,964.9 L1628.4,964.5 L1630.9,964.6 L1633.4,964.2 L1635.9,963.8 L1638.5,963.8 L1641.0,965.1 L1643.5,963.8 L1646.0,964.6 L1648.5,963.0 L1651.0,962.7 L1653.5,962.8 L1656.0,961.8 L1658.7,962.1 L1661.3,963.0 L1664.0,962.8 L1666.7,962.6 L1669.3,962.1 L1672.0,962.5 L1674.7,962.5 L1677.3,961.7 L1680.0,961.9 L1682.5,960.6 L1685.0,961.7 L1687.5,961.0 L1690.0,961.5 L1692.5,961.1 L1695.0,960.4 L1697.5,959.8 L1700.0,961.3 L1702.5,959.7 L1705.0,960.2 L1707.5,959.8 L1710.0,959.6 L1712.7,960.6 L1715.3,961.2 L1718.0,960.1 L1720.7,960.9 L1723.3,960.5 L1726.0,961.1 L1728.7,961.0 L1731.3,960.7 L1734.0,960.9 L1737.0,960.2 L1740.0,960.7 L1742.5,960.1 L1745.0,959.7 L1747.5,961.1 L1750.0,961.4 L1752.5,960.5 L1755.0,960.1 L1757.5,960.3 L1760.0,960.3 L1762.5,960.8 L1765.0,960.5 L1767.5,960.9 L1770.0,961.1 L1772.5,961.4 L1775.0,961.7 L1777.5,961.2 L1780.0,960.3 L1782.5,960.1 L1785.0,960.0 L1787.5,959.5 L1790.0,959.2 L1792.5,958.5 L1795.0,958.6 L1797.5,959.6 L1800.0,957.8 L1802.7,958.3 L1805.3,958.4 L1808.0,958.7 L1810.7,957.3 L1813.3,957.3 L1816.0,957.0 L1818.7,957.2 L1821.3,957.1 L1824.0,957.8 L1826.5,957.9 L1829.0,958.2 L1831.5,956.9 L1834.0,957.2 L1836.5,958.6 L1839.0,959.2 L1841.6,958.5 L1844.2,958.7 L1846.9,957.6 L1849.5,958.3 L1852.1,959.3 L1854.8,959.1 L1857.4,959.1 L1860.0,959.4 L1862.6,958.0 L1865.2,957.8 L1867.9,957.9 L1870.5,958.5 L1873.1,958.8 L1875.8,959.3 L1878.4,958.9 L1881.0,958.8 L1885.5,961.5 L1886,982 L126,982 Z" fill="#0b1020"/>
<rect x="1756" y="905" width="130" height="77" fill="#0c1330" fill-opacity="0.6"/>
<clipPath id="sel"><rect x="1756" y="905" width="130" height="77"/></clipPath>
<path d="M126.0,924.3 L128.6,924.1 L131.2,925.1 L133.9,924.2 L136.5,925.1 L139.1,924.9 L141.8,924.5 L144.4,925.4 L147.0,924.7 L150.0,921.5 L152.6,920.4 L155.2,920.0 L157.9,920.1 L160.5,920.4 L163.2,920.0 L165.9,921.0 L168.6,922.5 L171.3,924.0 L174.0,924.1 L176.6,923.7 L179.2,924.6 L181.9,922.7 L184.5,924.0 L187.1,922.9 L189.8,922.5 L192.4,922.3 L195.0,922.5 L198.0,923.8 L201.0,923.1 L204.0,924.3 L207.0,924.9 L211.5,929.2 L214.2,929.9 L216.9,929.5 L219.6,929.9 L222.3,930.6 L225.0,931.8 L227.5,931.7 L230.0,931.9 L232.5,932.7 L235.0,932.8 L237.5,932.9 L240.0,934.1 L242.5,934.5 L245.0,934.1 L247.5,935.2 L250.0,935.6 L252.5,936.8 L255.0,937.0 L258.0,937.0 L261.0,939.0 L264.0,938.2 L267.0,939.5 L270.0,939.1 L273.0,937.0 L276.0,936.6 L278.6,935.9 L281.2,937.2 L283.9,937.5 L286.5,937.3 L289.1,938.0 L291.8,937.2 L294.4,938.0 L297.0,938.0 L300.0,936.9 L303.0,935.7 L306.0,935.4 L309.0,935.3 L312.0,934.2 L315.0,934.2 L318.0,932.8 L321.0,934.4 L324.0,934.8 L327.0,935.8 L330.0,936.0 L333.0,933.4 L336.0,932.0 L339.0,930.9 L341.6,929.2 L344.1,929.5 L346.7,928.5 L349.3,927.9 L351.9,927.2 L354.4,928.0 L357.0,926.3 L359.6,926.5 L362.1,926.6 L364.7,927.4 L367.3,925.9 L369.9,926.5 L372.4,926.6 L375.0,927.1 L378.0,927.5 L381.0,928.1 L384.0,927.6 L387.0,928.3 L390.0,926.7 L393.0,926.2 L395.5,926.4 L398.0,925.0 L400.5,925.1 L403.0,925.2 L405.5,925.3 L408.0,925.8 L411.0,925.6 L414.0,924.6 L417.0,923.7 L420.0,925.7 L423.0,926.8 L426.0,928.3 L429.0,930.2 L431.5,929.5 L434.0,929.0 L436.5,929.0 L439.0,928.9 L441.5,927.6 L444.0,928.9 L447.0,929.2 L450.0,929.8 L453.0,930.1 L456.0,929.8 L459.0,929.8 L462.0,929.3 L465.0,930.2 L468.0,929.2 L471.0,935.2 L474.0,941.5 L476.5,942.1 L479.0,943.2 L481.5,943.4 L484.0,944.1 L486.5,945.1 L489.0,945.8 L492.0,944.4 L495.0,941.9 L498.0,941.5 L501.0,939.2 L503.5,937.6 L506.0,937.1 L508.5,936.5 L511.0,935.8 L513.5,934.6 L516.0,935.1 L519.0,937.6 L522.0,938.9 L525.0,938.2 L528.0,936.8 L531.0,936.0 L534.0,935.7 L537.0,936.3 L540.0,938.1 L543.0,937.6 L546.0,938.1 L549.0,940.3 L552.0,940.1 L555.0,939.9 L558.0,942.3 L561.0,943.0 L564.0,945.7 L567.0,945.9 L570.0,945.2 L573.0,944.4 L576.0,943.1 L578.6,943.1 L581.2,942.5 L583.9,943.4 L586.5,942.8 L589.1,943.1 L591.8,942.1 L594.4,941.7 L597.0,942.6 L599.5,942.6 L602.0,942.1 L604.5,941.8 L607.0,941.6 L609.5,941.2 L612.0,940.0 L614.6,940.7 L617.1,940.5 L619.7,940.0 L622.3,940.2 L624.9,940.7 L627.4,940.8 L630.0,941.7 L633.0,943.1 L636.0,943.1 L639.0,944.9 L642.0,945.9 L645.0,944.7 L648.0,942.5 L651.0,941.1 L654.0,940.0 L656.6,939.8 L659.1,939.8 L661.7,940.4 L664.3,940.8 L666.9,940.6 L669.4,939.8 L672.0,940.0 L674.6,940.2 L677.1,938.8 L679.7,939.7 L682.3,940.1 L684.9,939.7 L687.4,939.6 L690.0,939.0 L693.0,937.8 L696.0,938.3 L699.0,936.9 L702.0,937.1 L704.8,937.7 L707.5,937.0 L710.2,937.3 L713.0,938.6 L715.8,938.5 L718.5,937.8 L721.2,938.0 L724.0,938.4 L726.6,939.7 L729.2,939.6 L731.9,938.4 L734.5,939.6 L737.1,939.9 L739.8,939.3 L742.4,938.7 L745.0,939.1 L748.0,940.1 L751.0,941.7 L754.0,945.2 L756.6,944.4 L759.2,944.0 L761.9,944.5 L764.5,943.4 L767.1,943.9 L769.8,943.6 L772.4,942.3 L775.0,942.2 L777.7,942.3 L780.3,942.3 L783.0,943.1 L785.7,942.6 L788.3,943.0 L791.0,942.5 L793.7,944.0 L796.3,943.1 L799.0,943.4 L802.0,945.2 L805.0,947.2 L808.0,947.9 L810.6,949.6 L813.1,949.7 L815.7,950.6 L818.3,951.5 L820.9,951.4 L823.4,953.0 L826.0,953.4 L828.5,952.7 L831.0,953.7 L833.5,952.2 L836.0,952.4 L838.5,952.4 L841.0,951.7 L843.6,951.7 L846.2,952.4 L848.9,952.8 L851.5,953.6 L854.1,952.8 L856.8,954.0 L859.4,953.8 L862.0,954.2 L865.0,953.6 L868.0,951.6 L870.7,951.8 L873.3,952.3 L876.0,952.6 L878.7,951.9 L881.3,952.3 L884.0,952.2 L886.7,952.3 L889.3,952.7 L892.0,952.4 L894.6,952.0 L897.1,951.3 L899.7,951.6 L902.3,950.6 L904.9,950.4 L907.4,950.0 L910.0,948.2 L912.6,949.5 L915.1,950.9 L917.7,951.5 L920.3,951.0 L922.9,951.8 L925.4,953.1 L928.0,953.2 L930.6,953.5 L933.1,953.2 L935.7,954.3 L938.3,954.5 L940.9,954.7 L943.4,953.4 L946.0,954.4 L949.0,956.5 L952.0,957.9 L954.6,959.3 L957.1,959.5 L959.7,958.2 L962.3,959.6 L964.9,958.6 L967.4,958.9 L970.0,959.8 L972.6,959.6 L975.1,958.5 L977.7,959.0 L980.3,959.2 L982.9,959.0 L985.4,958.8 L988.0,959.1 L991.0,960.8 L994.0,960.6 L997.0,962.0 L1000.0,962.1 L1003.0,961.8 L1006.0,962.7 L1009.0,962.0 L1012.0,960.6 L1014.6,959.6 L1017.1,961.1 L1019.7,960.6 L1022.3,960.8 L1024.9,959.0 L1027.4,959.1 L1030.0,958.6 L1033.0,959.3 L1036.0,957.8 L1039.0,956.9 L1042.0,959.4 L1045.0,962.2 L1047.5,962.6 L1050.0,962.1 L1052.5,962.4 L1055.0,964.3 L1057.5,964.1 L1060.0,964.9 L1062.6,963.6 L1065.1,963.4 L1067.7,964.5 L1070.3,963.9 L1072.9,963.1 L1075.4,964.5 L1078.0,963.8 L1080.7,963.8 L1083.4,962.3 L1086.1,963.3 L1088.8,961.6 L1091.5,962.8 L1094.2,961.7 L1096.9,961.2 L1099.6,961.3 L1102.3,961.7 L1105.0,960.2 L1107.7,959.8 L1110.4,960.3 L1113.1,959.6 L1115.8,959.2 L1118.5,959.1 L1121.2,958.7 L1123.9,958.8 L1126.6,958.8 L1129.3,958.6 L1132.0,959.3 L1134.6,958.5 L1137.1,959.0 L1139.7,958.5 L1142.3,958.9 L1144.9,958.4 L1147.4,958.9 L1150.0,958.5 L1152.5,960.0 L1155.0,959.9 L1157.5,959.4 L1160.0,960.2 L1162.5,961.2 L1165.0,959.9 L1167.7,961.2 L1170.3,960.5 L1173.0,960.6 L1175.7,961.2 L1178.3,960.4 L1181.0,960.6 L1183.7,960.9 L1186.3,961.5 L1189.0,960.3 L1192.0,962.7 L1195.0,964.0 L1197.5,964.0 L1200.0,963.7 L1202.5,963.8 L1205.0,963.4 L1207.5,963.7 L1210.0,963.7 L1213.0,963.2 L1216.0,960.7 L1219.0,958.8 L1221.6,958.4 L1224.1,959.5 L1226.7,959.3 L1229.3,958.7 L1231.9,957.7 L1234.4,957.4 L1237.0,957.2 L1239.6,958.1 L1242.2,958.2 L1244.9,959.3 L1247.5,959.6 L1250.1,961.4 L1252.8,962.1 L1255.4,961.9 L1258.0,961.9 L1260.7,963.3 L1263.4,962.2 L1266.1,962.3 L1268.8,961.7 L1271.5,962.5 L1274.2,962.7 L1276.9,962.8 L1279.6,962.3 L1282.3,962.9 L1285.0,962.1 L1287.8,961.8 L1290.5,960.8 L1293.2,960.6 L1296.0,959.2 L1298.6,959.4 L1301.1,960.1 L1303.7,960.2 L1306.3,961.0 L1308.9,961.1 L1311.4,961.7 L1314.0,961.8 L1315.5,958.9 L1318.3,959.7 L1321.1,959.4 L1323.9,959.9 L1326.6,961.6 L1329.4,960.7 L1332.2,962.2 L1335.0,962.7 L1337.5,961.2 L1340.0,962.2 L1342.5,961.9 L1345.0,961.0 L1347.5,960.8 L1350.0,960.6 L1353.0,960.2 L1356.0,961.6 L1359.0,962.4 L1361.6,963.0 L1364.2,962.9 L1366.8,963.0 L1369.4,962.6 L1372.0,963.1 L1374.6,962.7 L1377.2,962.7 L1379.8,961.9 L1382.4,961.6 L1385.0,961.7 L1387.6,962.1 L1390.2,961.7 L1392.8,963.0 L1395.4,962.5 L1398.0,962.6 L1401.0,964.7 L1403.7,964.7 L1406.3,964.1 L1409.0,963.1 L1411.7,964.4 L1414.3,964.1 L1417.0,963.5 L1419.7,963.4 L1422.3,963.5 L1425.0,962.2 L1427.6,963.9 L1430.1,963.6 L1432.7,963.8 L1435.3,964.6 L1437.9,966.0 L1440.4,965.6 L1443.0,967.0 L1446.0,966.4 L1449.0,964.5 L1451.5,964.2 L1454.1,964.4 L1456.7,964.7 L1459.2,964.8 L1461.8,964.5 L1464.3,964.5 L1466.8,963.4 L1469.4,963.5 L1472.0,963.7 L1474.5,964.5 L1477.0,963.7 L1479.6,964.1 L1482.2,963.0 L1484.7,963.1 L1487.2,963.4 L1489.8,964.1 L1492.3,964.1 L1494.9,964.0 L1497.5,963.3 L1500.0,963.6 L1502.6,963.9 L1505.1,964.2 L1507.7,963.9 L1510.3,965.7 L1512.9,964.8 L1515.4,966.5 L1518.0,966.8 L1520.6,965.0 L1523.1,965.7 L1525.7,966.3 L1528.2,966.5 L1530.8,965.5 L1533.3,965.1 L1535.9,964.9 L1538.4,966.1 L1541.0,964.7 L1543.6,965.3 L1546.1,964.4 L1548.7,965.0 L1551.2,965.7 L1553.8,964.1 L1556.3,965.2 L1558.9,964.6 L1561.4,965.2 L1564.0,964.8 L1566.6,963.8 L1569.1,964.9 L1571.7,964.1 L1574.2,963.2 L1576.8,963.1 L1579.3,963.9 L1581.9,963.7 L1584.4,963.3 L1587.0,963.0 L1590.0,964.2 L1593.0,965.1 L1595.5,966.0 L1598.1,964.4 L1600.6,965.7 L1603.1,965.8 L1605.6,964.5 L1608.2,965.9 L1610.7,965.5 L1613.2,965.7 L1615.7,964.6 L1618.3,964.7 L1620.8,964.7 L1623.3,965.7 L1625.8,964.9 L1628.4,964.5 L1630.9,964.6 L1633.4,964.2 L1635.9,963.8 L1638.5,963.8 L1641.0,965.1 L1643.5,963.8 L1646.0,964.6 L1648.5,963.0 L1651.0,962.7 L1653.5,962.8 L1656.0,961.8 L1658.7,962.1 L1661.3,963.0 L1664.0,962.8 L1666.7,962.6 L1669.3,962.1 L1672.0,962.5 L1674.7,962.5 L1677.3,961.7 L1680.0,961.9 L1682.5,960.6 L1685.0,961.7 L1687.5,961.0 L1690.0,961.5 L1692.5,961.1 L1695.0,960.4 L1697.5,959.8 L1700.0,961.3 L1702.5,959.7 L1705.0,960.2 L1707.5,959.8 L1710.0,959.6 L1712.7,960.6 L1715.3,961.2 L1718.0,960.1 L1720.7,960.9 L1723.3,960.5 L1726.0,961.1 L1728.7,961.0 L1731.3,960.7 L1734.0,960.9 L1737.0,960.2 L1740.0,960.7 L1742.5,960.1 L1745.0,959.7 L1747.5,961.1 L1750.0,961.4 L1752.5,960.5 L1755.0,960.1 L1757.5,960.3 L1760.0,960.3 L1762.5,960.8 L1765.0,960.5 L1767.5,960.9 L1770.0,961.1 L1772.5,961.4 L1775.0,961.7 L1777.5,961.2 L1780.0,960.3 L1782.5,960.1 L1785.0,960.0 L1787.5,959.5 L1790.0,959.2 L1792.5,958.5 L1795.0,958.6 L1797.5,959.6 L1800.0,957.8 L1802.7,958.3 L1805.3,958.4 L1808.0,958.7 L1810.7,957.3 L1813.3,957.3 L1816.0,957.0 L1818.7,957.2 L1821.3,957.1 L1824.0,957.8 L1826.5,957.9 L1829.0,958.2 L1831.5,956.9 L1834.0,957.2 L1836.5,958.6 L1839.0,959.2 L1841.6,958.5 L1844.2,958.7 L1846.9,957.6 L1849.5,958.3 L1852.1,959.3 L1854.8,959.1 L1857.4,959.1 L1860.0,959.4 L1862.6,958.0 L1865.2,957.8 L1867.9,957.9 L1870.5,958.5 L1873.1,958.8 L1875.8,959.3 L1878.4,958.9 L1881.0,958.8 L1885.5,961.5 L1886,982 L126,982 Z" fill="#232b46" clip-path="url(#sel)"/>
<path d="M126.0,924.3 L128.6,924.1 L131.2,925.1 L133.9,924.2 L136.5,925.1 L139.1,924.9 L141.8,924.5 L144.4,925.4 L147.0,924.7 L150.0,921.5 L152.6,920.4 L155.2,920.0 L157.9,920.1 L160.5,920.4 L163.2,920.0 L165.9,921.0 L168.6,922.5 L171.3,924.0 L174.0,924.1 L176.6,923.7 L179.2,924.6 L181.9,922.7 L184.5,924.0 L187.1,922.9 L189.8,922.5 L192.4,922.3 L195.0,922.5 L198.0,923.8 L201.0,923.1 L204.0,924.3 L207.0,924.9 L211.5,929.2 L214.2,929.9 L216.9,929.5 L219.6,929.9 L222.3,930.6 L225.0,931.8 L227.5,931.7 L230.0,931.9 L232.5,932.7 L235.0,932.8 L237.5,932.9 L240.0,934.1 L242.5,934.5 L245.0,934.1 L247.5,935.2 L250.0,935.6 L252.5,936.8 L255.0,937.0 L258.0,937.0 L261.0,939.0 L264.0,938.2 L267.0,939.5 L270.0,939.1 L273.0,937.0 L276.0,936.6 L278.6,935.9 L281.2,937.2 L283.9,937.5 L286.5,937.3 L289.1,938.0 L291.8,937.2 L294.4,938.0 L297.0,938.0 L300.0,936.9 L303.0,935.7 L306.0,935.4 L309.0,935.3 L312.0,934.2 L315.0,934.2 L318.0,932.8 L321.0,934.4 L324.0,934.8 L327.0,935.8 L330.0,936.0 L333.0,933.4 L336.0,932.0 L339.0,930.9 L341.6,929.2 L344.1,929.5 L346.7,928.5 L349.3,927.9 L351.9,927.2 L354.4,928.0 L357.0,926.3 L359.6,926.5 L362.1,926.6 L364.7,927.4 L367.3,925.9 L369.9,926.5 L372.4,926.6 L375.0,927.1 L378.0,927.5 L381.0,928.1 L384.0,927.6 L387.0,928.3 L390.0,926.7 L393.0,926.2 L395.5,926.4 L398.0,925.0 L400.5,925.1 L403.0,925.2 L405.5,925.3 L408.0,925.8 L411.0,925.6 L414.0,924.6 L417.0,923.7 L420.0,925.7 L423.0,926.8 L426.0,928.3 L429.0,930.2 L431.5,929.5 L434.0,929.0 L436.5,929.0 L439.0,928.9 L441.5,927.6 L444.0,928.9 L447.0,929.2 L450.0,929.8 L453.0,930.1 L456.0,929.8 L459.0,929.8 L462.0,929.3 L465.0,930.2 L468.0,929.2 L471.0,935.2 L474.0,941.5 L476.5,942.1 L479.0,943.2 L481.5,943.4 L484.0,944.1 L486.5,945.1 L489.0,945.8 L492.0,944.4 L495.0,941.9 L498.0,941.5 L501.0,939.2 L503.5,937.6 L506.0,937.1 L508.5,936.5 L511.0,935.8 L513.5,934.6 L516.0,935.1 L519.0,937.6 L522.0,938.9 L525.0,938.2 L528.0,936.8 L531.0,936.0 L534.0,935.7 L537.0,936.3 L540.0,938.1 L543.0,937.6 L546.0,938.1 L549.0,940.3 L552.0,940.1 L555.0,939.9 L558.0,942.3 L561.0,943.0 L564.0,945.7 L567.0,945.9 L570.0,945.2 L573.0,944.4 L576.0,943.1 L578.6,943.1 L581.2,942.5 L583.9,943.4 L586.5,942.8 L589.1,943.1 L591.8,942.1 L594.4,941.7 L597.0,942.6 L599.5,942.6 L602.0,942.1 L604.5,941.8 L607.0,941.6 L609.5,941.2 L612.0,940.0 L614.6,940.7 L617.1,940.5 L619.7,940.0 L622.3,940.2 L624.9,940.7 L627.4,940.8 L630.0,941.7 L633.0,943.1 L636.0,943.1 L639.0,944.9 L642.0,945.9 L645.0,944.7 L648.0,942.5 L651.0,941.1 L654.0,940.0 L656.6,939.8 L659.1,939.8 L661.7,940.4 L664.3,940.8 L666.9,940.6 L669.4,939.8 L672.0,940.0 L674.6,940.2 L677.1,938.8 L679.7,939.7 L682.3,940.1 L684.9,939.7 L687.4,939.6 L690.0,939.0 L693.0,937.8 L696.0,938.3 L699.0,936.9 L702.0,937.1 L704.8,937.7 L707.5,937.0 L710.2,937.3 L713.0,938.6 L715.8,938.5 L718.5,937.8 L721.2,938.0 L724.0,938.4 L726.6,939.7 L729.2,939.6 L731.9,938.4 L734.5,939.6 L737.1,939.9 L739.8,939.3 L742.4,938.7 L745.0,939.1 L748.0,940.1 L751.0,941.7 L754.0,945.2 L756.6,944.4 L759.2,944.0 L761.9,944.5 L764.5,943.4 L767.1,943.9 L769.8,943.6 L772.4,942.3 L775.0,942.2 L777.7,942.3 L780.3,942.3 L783.0,943.1 L785.7,942.6 L788.3,943.0 L791.0,942.5 L793.7,944.0 L796.3,943.1 L799.0,943.4 L802.0,945.2 L805.0,947.2 L808.0,947.9 L810.6,949.6 L813.1,949.7 L815.7,950.6 L818.3,951.5 L820.9,951.4 L823.4,953.0 L826.0,953.4 L828.5,952.7 L831.0,953.7 L833.5,952.2 L836.0,952.4 L838.5,952.4 L841.0,951.7 L843.6,951.7 L846.2,952.4 L848.9,952.8 L851.5,953.6 L854.1,952.8 L856.8,954.0 L859.4,953.8 L862.0,954.2 L865.0,953.6 L868.0,951.6 L870.7,951.8 L873.3,952.3 L876.0,952.6 L878.7,951.9 L881.3,952.3 L884.0,952.2 L886.7,952.3 L889.3,952.7 L892.0,952.4 L894.6,952.0 L897.1,951.3 L899.7,951.6 L902.3,950.6 L904.9,950.4 L907.4,950.0 L910.0,948.2 L912.6,949.5 L915.1,950.9 L917.7,951.5 L920.3,951.0 L922.9,951.8 L925.4,953.1 L928.0,953.2 L930.6,953.5 L933.1,953.2 L935.7,954.3 L938.3,954.5 L940.9,954.7 L943.4,953.4 L946.0,954.4 L949.0,956.5 L952.0,957.9 L954.6,959.3 L957.1,959.5 L959.7,958.2 L962.3,959.6 L964.9,958.6 L967.4,958.9 L970.0,959.8 L972.6,959.6 L975.1,958.5 L977.7,959.0 L980.3,959.2 L982.9,959.0 L985.4,958.8 L988.0,959.1 L991.0,960.8 L994.0,960.6 L997.0,962.0 L1000.0,962.1 L1003.0,961.8 L1006.0,962.7 L1009.0,962.0 L1012.0,960.6 L1014.6,959.6 L1017.1,961.1 L1019.7,960.6 L1022.3,960.8 L1024.9,959.0 L1027.4,959.1 L1030.0,958.6 L1033.0,959.3 L1036.0,957.8 L1039.0,956.9 L1042.0,959.4 L1045.0,962.2 L1047.5,962.6 L1050.0,962.1 L1052.5,962.4 L1055.0,964.3 L1057.5,964.1 L1060.0,964.9 L1062.6,963.6 L1065.1,963.4 L1067.7,964.5 L1070.3,963.9 L1072.9,963.1 L1075.4,964.5 L1078.0,963.8 L1080.7,963.8 L1083.4,962.3 L1086.1,963.3 L1088.8,961.6 L1091.5,962.8 L1094.2,961.7 L1096.9,961.2 L1099.6,961.3 L1102.3,961.7 L1105.0,960.2 L1107.7,959.8 L1110.4,960.3 L1113.1,959.6 L1115.8,959.2 L1118.5,959.1 L1121.2,958.7 L1123.9,958.8 L1126.6,958.8 L1129.3,958.6 L1132.0,959.3 L1134.6,958.5 L1137.1,959.0 L1139.7,958.5 L1142.3,958.9 L1144.9,958.4 L1147.4,958.9 L1150.0,958.5 L1152.5,960.0 L1155.0,959.9 L1157.5,959.4 L1160.0,960.2 L1162.5,961.2 L1165.0,959.9 L1167.7,961.2 L1170.3,960.5 L1173.0,960.6 L1175.7,961.2 L1178.3,960.4 L1181.0,960.6 L1183.7,960.9 L1186.3,961.5 L1189.0,960.3 L1192.0,962.7 L1195.0,964.0 L1197.5,964.0 L1200.0,963.7 L1202.5,963.8 L1205.0,963.4 L1207.5,963.7 L1210.0,963.7 L1213.0,963.2 L1216.0,960.7 L1219.0,958.8 L1221.6,958.4 L1224.1,959.5 L1226.7,959.3 L1229.3,958.7 L1231.9,957.7 L1234.4,957.4 L1237.0,957.2 L1239.6,958.1 L1242.2,958.2 L1244.9,959.3 L1247.5,959.6 L1250.1,961.4 L1252.8,962.1 L1255.4,961.9 L1258.0,961.9 L1260.7,963.3 L1263.4,962.2 L1266.1,962.3 L1268.8,961.7 L1271.5,962.5 L1274.2,962.7 L1276.9,962.8 L1279.6,962.3 L1282.3,962.9 L1285.0,962.1 L1287.8,961.8 L1290.5,960.8 L1293.2,960.6 L1296.0,959.2 L1298.6,959.4 L1301.1,960.1 L1303.7,960.2 L1306.3,961.0 L1308.9,961.1 L1311.4,961.7 L1314.0,961.8 L1315.5,958.9 L1318.3,959.7 L1321.1,959.4 L1323.9,959.9 L1326.6,961.6 L1329.4,960.7 L1332.2,962.2 L1335.0,962.7 L1337.5,961.2 L1340.0,962.2 L1342.5,961.9 L1345.0,961.0 L1347.5,960.8 L1350.0,960.6 L1353.0,960.2 L1356.0,961.6 L1359.0,962.4 L1361.6,963.0 L1364.2,962.9 L1366.8,963.0 L1369.4,962.6 L1372.0,963.1 L1374.6,962.7 L1377.2,962.7 L1379.8,961.9 L1382.4,961.6 L1385.0,961.7 L1387.6,962.1 L1390.2,961.7 L1392.8,963.0 L1395.4,962.5 L1398.0,962.6 L1401.0,964.7 L1403.7,964.7 L1406.3,964.1 L1409.0,963.1 L1411.7,964.4 L1414.3,964.1 L1417.0,963.5 L1419.7,963.4 L1422.3,963.5 L1425.0,962.2 L1427.6,963.9 L1430.1,963.6 L1432.7,963.8 L1435.3,964.6 L1437.9,966.0 L1440.4,965.6 L1443.0,967.0 L1446.0,966.4 L1449.0,964.5 L1451.5,964.2 L1454.1,964.4 L1456.7,964.7 L1459.2,964.8 L1461.8,964.5 L1464.3,964.5 L1466.8,963.4 L1469.4,963.5 L1472.0,963.7 L1474.5,964.5 L1477.0,963.7 L1479.6,964.1 L1482.2,963.0 L1484.7,963.1 L1487.2,963.4 L1489.8,964.1 L1492.3,964.1 L1494.9,964.0 L1497.5,963.3 L1500.0,963.6 L1502.6,963.9 L1505.1,964.2 L1507.7,963.9 L1510.3,965.7 L1512.9,964.8 L1515.4,966.5 L1518.0,966.8 L1520.6,965.0 L1523.1,965.7 L1525.7,966.3 L1528.2,966.5 L1530.8,965.5 L1533.3,965.1 L1535.9,964.9 L1538.4,966.1 L1541.0,964.7 L1543.6,965.3 L1546.1,964.4 L1548.7,965.0 L1551.2,965.7 L1553.8,964.1 L1556.3,965.2 L1558.9,964.6 L1561.4,965.2 L1564.0,964.8 L1566.6,963.8 L1569.1,964.9 L1571.7,964.1 L1574.2,963.2 L1576.8,963.1 L1579.3,963.9 L1581.9,963.7 L1584.4,963.3 L1587.0,963.0 L1590.0,964.2 L1593.0,965.1 L1595.5,966.0 L1598.1,964.4 L1600.6,965.7 L1603.1,965.8 L1605.6,964.5 L1608.2,965.9 L1610.7,965.5 L1613.2,965.7 L1615.7,964.6 L1618.3,964.7 L1620.8,964.7 L1623.3,965.7 L1625.8,964.9 L1628.4,964.5 L1630.9,964.6 L1633.4,964.2 L1635.9,963.8 L1638.5,963.8 L1641.0,965.1 L1643.5,963.8 L1646.0,964.6 L1648.5,963.0 L1651.0,962.7 L1653.5,962.8 L1656.0,961.8 L1658.7,962.1 L1661.3,963.0 L1664.0,962.8 L1666.7,962.6 L1669.3,962.1 L1672.0,962.5 L1674.7,962.5 L1677.3,961.7 L1680.0,961.9 L1682.5,960.6 L1685.0,961.7 L1687.5,961.0 L1690.0,961.5 L1692.5,961.1 L1695.0,960.4 L1697.5,959.8 L1700.0,961.3 L1702.5,959.7 L1705.0,960.2 L1707.5,959.8 L1710.0,959.6 L1712.7,960.6 L1715.3,961.2 L1718.0,960.1 L1720.7,960.9 L1723.3,960.5 L1726.0,961.1 L1728.7,961.0 L1731.3,960.7 L1734.0,960.9 L1737.0,960.2 L1740.0,960.7 L1742.5,960.1 L1745.0,959.7 L1747.5,961.1 L1750.0,961.4 L1752.5,960.5 L1755.0,960.1 L1757.5,960.3 L1760.0,960.3 L1762.5,960.8 L1765.0,960.5 L1767.5,960.9 L1770.0,961.1 L1772.5,961.4 L1775.0,961.7 L1777.5,961.2 L1780.0,960.3 L1782.5,960.1 L1785.0,960.0 L1787.5,959.5 L1790.0,959.2 L1792.5,958.5 L1795.0,958.6 L1797.5,959.6 L1800.0,957.8 L1802.7,958.3 L1805.3,958.4 L1808.0,958.7 L1810.7,957.3 L1813.3,957.3 L1816.0,957.0 L1818.7,957.2 L1821.3,957.1 L1824.0,957.8 L1826.5,957.9 L1829.0,958.2 L1831.5,956.9 L1834.0,957.2 L1836.5,958.6 L1839.0,959.2 L1841.6,958.5 L1844.2,958.7 L1846.9,957.6 L1849.5,958.3 L1852.1,959.3 L1854.8,959.1 L1857.4,959.1 L1860.0,959.4 L1862.6,958.0 L1865.2,957.8 L1867.9,957.9 L1870.5,958.5 L1873.1,958.8 L1875.8,959.3 L1878.4,958.9 L1881.0,958.8 L1885.5,961.5" fill="none" stroke="#3b58a3" stroke-width="1.2"/>
<path d="M126.0,924.3 L128.6,924.1 L131.2,925.1 L133.9,924.2 L136.5,925.1 L139.1,924.9 L141.8,924.5 L144.4,925.4 L147.0,924.7 L150.0,921.5 L152.6,920.4 L155.2,920.0 L157.9,920.1 L160.5,920.4 L163.2,920.0 L165.9,921.0 L168.6,922.5 L171.3,924.0 L174.0,924.1 L176.6,923.7 L179.2,924.6 L181.9,922.7 L184.5,924.0 L187.1,922.9 L189.8,922.5 L192.4,922.3 L195.0,922.5 L198.0,923.8 L201.0,923.1 L204.0,924.3 L207.0,924.9 L211.5,929.2 L214.2,929.9 L216.9,929.5 L219.6,929.9 L222.3,930.6 L225.0,931.8 L227.5,931.7 L230.0,931.9 L232.5,932.7 L235.0,932.8 L237.5,932.9 L240.0,934.1 L242.5,934.5 L245.0,934.1 L247.5,935.2 L250.0,935.6 L252.5,936.8 L255.0,937.0 L258.0,937.0 L261.0,939.0 L264.0,938.2 L267.0,939.5 L270.0,939.1 L273.0,937.0 L276.0,936.6 L278.6,935.9 L281.2,937.2 L283.9,937.5 L286.5,937.3 L289.1,938.0 L291.8,937.2 L294.4,938.0 L297.0,938.0 L300.0,936.9 L303.0,935.7 L306.0,935.4 L309.0,935.3 L312.0,934.2 L315.0,934.2 L318.0,932.8 L321.0,934.4 L324.0,934.8 L327.0,935.8 L330.0,936.0 L333.0,933.4 L336.0,932.0 L339.0,930.9 L341.6,929.2 L344.1,929.5 L346.7,928.5 L349.3,927.9 L351.9,927.2 L354.4,928.0 L357.0,926.3 L359.6,926.5 L362.1,926.6 L364.7,927.4 L367.3,925.9 L369.9,926.5 L372.4,926.6 L375.0,927.1 L378.0,927.5 L381.0,928.1 L384.0,927.6 L387.0,928.3 L390.0,926.7 L393.0,926.2 L395.5,926.4 L398.0,925.0 L400.5,925.1 L403.0,925.2 L405.5,925.3 L408.0,925.8 L411.0,925.6 L414.0,924.6 L417.0,923.7 L420.0,925.7 L423.0,926.8 L426.0,928.3 L429.0,930.2 L431.5,929.5 L434.0,929.0 L436.5,929.0 L439.0,928.9 L441.5,927.6 L444.0,928.9 L447.0,929.2 L450.0,929.8 L453.0,930.1 L456.0,929.8 L459.0,929.8 L462.0,929.3 L465.0,930.2 L468.0,929.2 L471.0,935.2 L474.0,941.5 L476.5,942.1 L479.0,943.2 L481.5,943.4 L484.0,944.1 L486.5,945.1 L489.0,945.8 L492.0,944.4 L495.0,941.9 L498.0,941.5 L501.0,939.2 L503.5,937.6 L506.0,937.1 L508.5,936.5 L511.0,935.8 L513.5,934.6 L516.0,935.1 L519.0,937.6 L522.0,938.9 L525.0,938.2 L528.0,936.8 L531.0,936.0 L534.0,935.7 L537.0,936.3 L540.0,938.1 L543.0,937.6 L546.0,938.1 L549.0,940.3 L552.0,940.1 L555.0,939.9 L558.0,942.3 L561.0,943.0 L564.0,945.7 L567.0,945.9 L570.0,945.2 L573.0,944.4 L576.0,943.1 L578.6,943.1 L581.2,942.5 L583.9,943.4 L586.5,942.8 L589.1,943.1 L591.8,942.1 L594.4,941.7 L597.0,942.6 L599.5,942.6 L602.0,942.1 L604.5,941.8 L607.0,941.6 L609.5,941.2 L612.0,940.0 L614.6,940.7 L617.1,940.5 L619.7,940.0 L622.3,940.2 L624.9,940.7 L627.4,940.8 L630.0,941.7 L633.0,943.1 L636.0,943.1 L639.0,944.9 L642.0,945.9 L645.0,944.7 L648.0,942.5 L651.0,941.1 L654.0,940.0 L656.6,939.8 L659.1,939.8 L661.7,940.4 L664.3,940.8 L666.9,940.6 L669.4,939.8 L672.0,940.0 L674.6,940.2 L677.1,938.8 L679.7,939.7 L682.3,940.1 L684.9,939.7 L687.4,939.6 L690.0,939.0 L693.0,937.8 L696.0,938.3 L699.0,936.9 L702.0,937.1 L704.8,937.7 L707.5,937.0 L710.2,937.3 L713.0,938.6 L715.8,938.5 L718.5,937.8 L721.2,938.0 L724.0,938.4 L726.6,939.7 L729.2,939.6 L731.9,938.4 L734.5,939.6 L737.1,939.9 L739.8,939.3 L742.4,938.7 L745.0,939.1 L748.0,940.1 L751.0,941.7 L754.0,945.2 L756.6,944.4 L759.2,944.0 L761.9,944.5 L764.5,943.4 L767.1,943.9 L769.8,943.6 L772.4,942.3 L775.0,942.2 L777.7,942.3 L780.3,942.3 L783.0,943.1 L785.7,942.6 L788.3,943.0 L791.0,942.5 L793.7,944.0 L796.3,943.1 L799.0,943.4 L802.0,945.2 L805.0,947.2 L808.0,947.9 L810.6,949.6 L813.1,949.7 L815.7,950.6 L818.3,951.5 L820.9,951.4 L823.4,953.0 L826.0,953.4 L828.5,952.7 L831.0,953.7 L833.5,952.2 L836.0,952.4 L838.5,952.4 L841.0,951.7 L843.6,951.7 L846.2,952.4 L848.9,952.8 L851.5,953.6 L854.1,952.8 L856.8,954.0 L859.4,953.8 L862.0,954.2 L865.0,953.6 L868.0,951.6 L870.7,951.8 L873.3,952.3 L876.0,952.6 L878.7,951.9 L881.3,952.3 L884.0,952.2 L886.7,952.3 L889.3,952.7 L892.0,952.4 L894.6,952.0 L897.1,951.3 L899.7,951.6 L902.3,950.6 L904.9,950.4 L907.4,950.0 L910.0,948.2 L912.6,949.5 L915.1,950.9 L917.7,951.5 L920.3,951.0 L922.9,951.8 L925.4,953.1 L928.0,953.2 L930.6,953.5 L933.1,953.2 L935.7,954.3 L938.3,954.5 L940.9,954.7 L943.4,953.4 L946.0,954.4 L949.0,956.5 L952.0,957.9 L954.6,959.3 L957.1,959.5 L959.7,958.2 L962.3,959.6 L964.9,958.6 L967.4,958.9 L970.0,959.8 L972.6,959.6 L975.1,958.5 L977.7,959.0 L980.3,959.2 L982.9,959.0 L985.4,958.8 L988.0,959.1 L991.0,960.8 L994.0,960.6 L997.0,962.0 L1000.0,962.1 L1003.0,961.8 L1006.0,962.7 L1009.0,962.0 L1012.0,960.6 L1014.6,959.6 L1017.1,961.1 L1019.7,960.6 L1022.3,960.8 L1024.9,959.0 L1027.4,959.1 L1030.0,958.6 L1033.0,959.3 L1036.0,957.8 L1039.0,956.9 L1042.0,959.4 L1045.0,962.2 L1047.5,962.6 L1050.0,962.1 L1052.5,962.4 L1055.0,964.3 L1057.5,964.1 L1060.0,964.9 L1062.6,963.6 L1065.1,963.4 L1067.7,964.5 L1070.3,963.9 L1072.9,963.1 L1075.4,964.5 L1078.0,963.8 L1080.7,963.8 L1083.4,962.3 L1086.1,963.3 L1088.8,961.6 L1091.5,962.8 L1094.2,961.7 L1096.9,961.2 L1099.6,961.3 L1102.3,961.7 L1105.0,960.2 L1107.7,959.8 L1110.4,960.3 L1113.1,959.6 L1115.8,959.2 L1118.5,959.1 L1121.2,958.7 L1123.9,958.8 L1126.6,958.8 L1129.3,958.6 L1132.0,959.3 L1134.6,958.5 L1137.1,959.0 L1139.7,958.5 L1142.3,958.9 L1144.9,958.4 L1147.4,958.9 L1150.0,958.5 L1152.5,960.0 L1155.0,959.9 L1157.5,959.4 L1160.0,960.2 L1162.5,961.2 L1165.0,959.9 L1167.7,961.2 L1170.3,960.5 L1173.0,960.6 L1175.7,961.2 L1178.3,960.4 L1181.0,960.6 L1183.7,960.9 L1186.3,961.5 L1189.0,960.3 L1192.0,962.7 L1195.0,964.0 L1197.5,964.0 L1200.0,963.7 L1202.5,963.8 L1205.0,963.4 L1207.5,963.7 L1210.0,963.7 L1213.0,963.2 L1216.0,960.7 L1219.0,958.8 L1221.6,958.4 L1224.1,959.5 L1226.7,959.3 L1229.3,958.7 L1231.9,957.7 L1234.4,957.4 L1237.0,957.2 L1239.6,958.1 L1242.2,958.2 L1244.9,959.3 L1247.5,959.6 L1250.1,961.4 L1252.8,962.1 L1255.4,961.9 L1258.0,961.9 L1260.7,963.3 L1263.4,962.2 L1266.1,962.3 L1268.8,961.7 L1271.5,962.5 L1274.2,962.7 L1276.9,962.8 L1279.6,962.3 L1282.3,962.9 L1285.0,962.1 L1287.8,961.8 L1290.5,960.8 L1293.2,960.6 L1296.0,959.2 L1298.6,959.4 L1301.1,960.1 L1303.7,960.2 L1306.3,961.0 L1308.9,961.1 L1311.4,961.7 L1314.0,961.8 L1315.5,958.9 L1318.3,959.7 L1321.1,959.4 L1323.9,959.9 L1326.6,961.6 L1329.4,960.7 L1332.2,962.2 L1335.0,962.7 L1337.5,961.2 L1340.0,962.2 L1342.5,961.9 L1345.0,961.0 L1347.5,960.8 L1350.0,960.6 L1353.0,960.2 L1356.0,961.6 L1359.0,962.4 L1361.6,963.0 L1364.2,962.9 L1366.8,963.0 L1369.4,962.6 L1372.0,963.1 L1374.6,962.7 L1377.2,962.7 L1379.8,961.9 L1382.4,961.6 L1385.0,961.7 L1387.6,962.1 L1390.2,961.7 L1392.8,963.0 L1395.4,962.5 L1398.0,962.6 L1401.0,964.7 L1403.7,964.7 L1406.3,964.1 L1409.0,963.1 L1411.7,964.4 L1414.3,964.1 L1417.0,963.5 L1419.7,963.4 L1422.3,963.5 L1425.0,962.2 L1427.6,963.9 L1430.1,963.6 L1432.7,963.8 L1435.3,964.6 L1437.9,966.0 L1440.4,965.6 L1443.0,967.0 L1446.0,966.4 L1449.0,964.5 L1451.5,964.2 L1454.1,964.4 L1456.7,964.7 L1459.2,964.8 L1461.8,964.5 L1464.3,964.5 L1466.8,963.4 L1469.4,963.5 L1472.0,963.7 L1474.5,964.5 L1477.0,963.7 L1479.6,964.1 L1482.2,963.0 L1484.7,963.1 L1487.2,963.4 L1489.8,964.1 L1492.3,964.1 L1494.9,964.0 L1497.5,963.3 L1500.0,963.6 L1502.6,963.9 L1505.1,964.2 L1507.7,963.9 L1510.3,965.7 L1512.9,964.8 L1515.4,966.5 L1518.0,966.8 L1520.6,965.0 L1523.1,965.7 L1525.7,966.3 L1528.2,966.5 L1530.8,965.5 L1533.3,965.1 L1535.9,964.9 L1538.4,966.1 L1541.0,964.7 L1543.6,965.3 L1546.1,964.4 L1548.7,965.0 L1551.2,965.7 L1553.8,964.1 L1556.3,965.2 L1558.9,964.6 L1561.4,965.2 L1564.0,964.8 L1566.6,963.8 L1569.1,964.9 L1571.7,964.1 L1574.2,963.2 L1576.8,963.1 L1579.3,963.9 L1581.9,963.7 L1584.4,963.3 L1587.0,963.0 L1590.0,964.2 L1593.0,965.1 L1595.5,966.0 L1598.1,964.4 L1600.6,965.7 L1603.1,965.8 L1605.6,964.5 L1608.2,965.9 L1610.7,965.5 L1613.2,965.7 L1615.7,964.6 L1618.3,964.7 L1620.8,964.7 L1623.3,965.7 L1625.8,964.9 L1628.4,964.5 L1630.9,964.6 L1633.4,964.2 L1635.9,963.8 L1638.5,963.8 L1641.0,965.1 L1643.5,963.8 L1646.0,964.6 L1648.5,963.0 L1651.0,962.7 L1653.5,962.8 L1656.0,961.8 L1658.7,962.1 L1661.3,963.0 L1664.0,962.8 L1666.7,962.6 L1669.3,962.1 L1672.0,962.5 L1674.7,962.5 L1677.3,961.7 L1680.0,961.9 L1682.5,960.6 L1685.0,961.7 L1687.5,961.0 L1690.0,961.5 L1692.5,961.1 L1695.0,960.4 L1697.5,959.8 L1700.0,961.3 L1702.5,959.7 L1705.0,960.2 L1707.5,959.8 L1710.0,959.6 L1712.7,960.6 L1715.3,961.2 L1718.0,960.1 L1720.7,960.9 L1723.3,960.5 L1726.0,961.1 L1728.7,961.0 L1731.3,960.7 L1734.0,960.9 L1737.0,960.2 L1740.0,960.7 L1742.5,960.1 L1745.0,959.7 L1747.5,961.1 L1750.0,961.4 L1752.5,960.5 L1755.0,960.1 L1757.5,960.3 L1760.0,960.3 L1762.5,960.8 L1765.0,960.5 L1767.5,960.9 L1770.0,961.1 L1772.5,961.4 L1775.0,961.7 L1777.5,961.2 L1780.0,960.3 L1782.5,960.1 L1785.0,960.0 L1787.5,959.5 L1790.0,959.2 L1792.5,958.5 L1795.0,958.6 L1797.5,959.6 L1800.0,957.8 L1802.7,958.3 L1805.3,958.4 L1808.0,958.7 L1810.7,957.3 L1813.3,957.3 L1816.0,957.0 L1818.7,957.2 L1821.3,957.1 L1824.0,957.8 L1826.5,957.9 L1829.0,958.2 L1831.5,956.9 L1834.0,957.2 L1836.5,958.6 L1839.0,959.2 L1841.6,958.5 L1844.2,958.7 L1846.9,957.6 L1849.5,958.3 L1852.1,959.3 L1854.8,959.1 L1857.4,959.1 L1860.0,959.4 L1862.6,958.0 L1865.2,957.8 L1867.9,957.9 L1870.5,958.5 L1873.1,958.8 L1875.8,959.3 L1878.4,958.9 L1881.0,958.8 L1885.5,961.5" fill="none" stroke="#6f84c4" stroke-width="1.2" clip-path="url(#sel)"/>
<rect x="1748" y="934.3" width="18.8" height="22" rx="6" fill="#3b3e4b"/>
<line x1="1755.2" y1="941.6" x2="1755.2" y2="949.5" stroke="#a9aab3" stroke-width="1.6"/>
<line x1="1759.2" y1="941.6" x2="1759.2" y2="949.5" stroke="#a9aab3" stroke-width="1.6"/>
<rect x="1875.2" y="934.3" width="18.8" height="22" rx="6" fill="#3b3e4b"/>
<line x1="1882.4" y1="941.6" x2="1882.4" y2="949.5" stroke="#a9aab3" stroke-width="1.6"/>
<line x1="1886.4" y1="941.6" x2="1886.4" y2="949.5" stroke="#a9aab3" stroke-width="1.6"/>
</svg>
<div class="a" style="top:611.86px;font-size:16px;line-height:16px;color:#b9bbbf;right:1888.70px;text-align:right;transform:scaleX(0.91);transform-origin:right 0;">0.0120%</div>
<div class="a" style="top:648.66px;font-size:16px;line-height:16px;color:#b9bbbf;right:1888.70px;text-align:right;transform:scaleX(0.91);transform-origin:right 0;">0.0090%</div>
<div class="a" style="top:685.46px;font-size:16px;line-height:16px;color:#b9bbbf;right:1888.70px;text-align:right;transform:scaleX(0.91);transform-origin:right 0;">0.0060%</div>
<div class="a" style="top:722.26px;font-size:16px;line-height:16px;color:#b9bbbf;right:1888.70px;text-align:right;transform:scaleX(0.91);transform-origin:right 0;">0.0030%</div>
<div class="a" style="top:759.06px;font-size:16px;line-height:16px;color:#b9bbbf;right:1888.70px;text-align:right;transform:scaleX(0.91);transform-origin:right 0;">0%</div>
<div class="a" style="top:795.86px;font-size:16px;line-height:16px;color:#b9bbbf;right:1888.70px;text-align:right;transform:scaleX(0.91);transform-origin:right 0;">-0.0030%</div>
<div class="a" style="top:832.66px;font-size:16px;line-height:16px;color:#b9bbbf;right:1888.70px;text-align:right;transform:scaleX(0.91);transform-origin:right 0;">-0.0060%</div>
<div class="a" style="top:869.46px;font-size:16px;line-height:16px;color:#b9bbbf;right:1888.70px;text-align:right;transform:scaleX(0.91);transform-origin:right 0;">-0.0090%</div>
<div class="a" style="top:624.44px;font-size:15.6px;line-height:15.6px;color:#b9bbbf;left:1893.70px;transform:scaleX(0.956);transform-origin:left 0;">$160.00</div>
<div class="a" style="top:685.74px;font-size:15.6px;line-height:15.6px;color:#b9bbbf;left:1893.70px;transform:scaleX(0.956);transform-origin:left 0;">$150.00</div>
<div class="a" style="top:746.74px;font-size:15.6px;line-height:15.6px;color:#b9bbbf;left:1893.70px;transform:scaleX(0.956);transform-origin:left 0;">$140.00</div>
<div class="a" style="top:807.44px;font-size:15.6px;line-height:15.6px;color:#b9bbbf;left:1893.70px;transform:scaleX(0.956);transform-origin:left 0;">$130.00</div>
<div class="a" style="top:868.74px;font-size:15.6px;line-height:15.6px;color:#b9bbbf;left:1893.70px;transform:scaleX(0.956);transform-origin:left 0;">$120.00</div>
<div class="a" style="top:887.88px;font-size:15.5px;line-height:15.5px;color:#b6b8bc;left:-117.60px;width:600px;text-align:center;transform:scaleX(0.939);transform-origin:center 0;">10 Jan</div>
<div class="a" style="top:887.88px;font-size:15.5px;line-height:15.5px;color:#b6b8bc;left:-54.45px;width:600px;text-align:center;transform:scaleX(0.939);transform-origin:center 0;">10 Jan</div>
<div class="a" style="top:887.88px;font-size:15.5px;line-height:15.5px;color:#b6b8bc;left:8.70px;width:600px;text-align:center;transform:scaleX(0.939);transform-origin:center 0;">11 Jan</div>
<div class="a" style="top:887.88px;font-size:15.5px;line-height:15.5px;color:#b6b8bc;left:71.85px;width:600px;text-align:center;transform:scaleX(0.939);transform-origin:center 0;">11 Jan</div>
<div class="a" style="top:887.88px;font-size:15.5px;line-height:15.5px;color:#b6b8bc;left:135.00px;width:600px;text-align:center;transform:scaleX(0.939);transform-origin:center 0;">11 Jan</div>
<div class="a" style="top:887.88px;font-size:15.5px;line-height:15.5px;color:#b6b8bc;left:198.15px;width:600px;text-align:center;transform:scaleX(0.939);transform-origin:center 0;">12 Jan</div>
<div class="a" style="top:887.88px;font-size:15.5px;line-height:15.5px;color:#b6b8bc;left:261.30px;width:600px;text-align:center;transform:scaleX(0.939);transform-origin:center 0;">12 Jan</div>
<div class="a" style="top:887.88px;font-size:15.5px;line-height:15.5px;color:#b6b8bc;left:324.45px;width:600px;text-align:center;transform:scaleX(0.939);transform-origin:center 0;">12 Jan</div>
<div class="a" style="top:887.88px;font-size:15.5px;line-height:15.5px;color:#b6b8bc;left:387.60px;width:600px;text-align:center;transform:scaleX(0.939);transform-origin:center 0;">13 Jan</div>
<div class="a" style="top:887.88px;font-size:15.5px;line-height:15.5px;color:#b6b8bc;left:450.75px;width:600px;text-align:center;transform:scaleX(0.939);transform-origin:center 0;">13 Jan</div>
<div class="a" style="top:887.88px;font-size:15.5px;line-height:15.5px;color:#b6b8bc;left:513.90px;width:600px;text-align:center;transform:scaleX(0.939);transform-origin:center 0;">13 Jan</div>
<div class="a" style="top:887.88px;font-size:15.5px;line-height:15.5px;color:#b6b8bc;left:577.05px;width:600px;text-align:center;transform:scaleX(0.939);transform-origin:center 0;">14 Jan</div>
<div class="a" style="top:887.88px;font-size:15.5px;line-height:15.5px;color:#b6b8bc;left:640.20px;width:600px;text-align:center;transform:scaleX(0.939);transform-origin:center 0;">14 Jan</div>
<div class="a" style="top:887.88px;font-size:15.5px;line-height:15.5px;color:#b6b8bc;left:703.35px;width:600px;text-align:center;transform:scaleX(0.939);transform-origin:center 0;">14 Jan</div>
<div class="a" style="top:887.88px;font-size:15.5px;line-height:15.5px;color:#b6b8bc;left:766.50px;width:600px;text-align:center;transform:scaleX(0.939);transform-origin:center 0;">15 Jan</div>
<div class="a" style="top:887.88px;font-size:15.5px;line-height:15.5px;color:#b6b8bc;left:829.65px;width:600px;text-align:center;transform:scaleX(0.939);transform-origin:center 0;">15 Jan</div>
<div class="a" style="top:887.88px;font-size:15.5px;line-height:15.5px;color:#b6b8bc;left:892.80px;width:600px;text-align:center;transform:scaleX(0.939);transform-origin:center 0;">15 Jan</div>
<div class="a" style="top:887.88px;font-size:15.5px;line-height:15.5px;color:#b6b8bc;left:955.95px;width:600px;text-align:center;transform:scaleX(0.939);transform-origin:center 0;">16 Jan</div>
<div class="a" style="top:887.88px;font-size:15.5px;line-height:15.5px;color:#b6b8bc;left:1019.10px;width:600px;text-align:center;transform:scaleX(0.939);transform-origin:center 0;">16 Jan</div>
<div class="a" style="top:887.88px;font-size:15.5px;line-height:15.5px;color:#b6b8bc;left:1082.25px;width:600px;text-align:center;transform:scaleX(0.939);transform-origin:center 0;">16 Jan</div>
<div class="a" style="top:887.88px;font-size:15.5px;line-height:15.5px;color:#b6b8bc;left:1145.40px;width:600px;text-align:center;transform:scaleX(0.939);transform-origin:center 0;">17 Jan</div>
<div class="a" style="top:887.88px;font-size:15.5px;line-height:15.5px;color:#b6b8bc;left:1208.55px;width:600px;text-align:center;transform:scaleX(0.939);transform-origin:center 0;">17 Jan</div>
<div class="a" style="top:887.88px;font-size:15.5px;line-height:15.5px;color:#b6b8bc;left:1271.70px;width:600px;text-align:center;transform:scaleX(0.939);transform-origin:center 0;">17 Jan</div>
<div class="a" style="top:887.88px;font-size:15.5px;line-height:15.5px;color:#b6b8bc;left:1334.85px;width:600px;text-align:center;transform:scaleX(0.939);transform-origin:center 0;">18 Jan</div>
<div class="a" style="top:887.88px;font-size:15.5px;line-height:15.5px;color:#b6b8bc;left:1398.00px;width:600px;text-align:center;transform:scaleX(0.939);transform-origin:center 0;">18 Jan</div>
<div class="a" style="top:887.88px;font-size:15.5px;line-height:15.5px;color:#b6b8bc;left:1461.15px;width:600px;text-align:center;transform:scaleX(0.939);transform-origin:center 0;">18 Jan</div>
<div class="a" style="top:887.88px;font-size:15.5px;line-height:15.5px;color:#b6b8bc;left:1524.30px;width:600px;text-align:center;transform:scaleX(0.939);transform-origin:center 0;">19 Jan</div>
<div class="a" style="left:72px;top:643.3px;width:46.3px;height:28px;background:#000;border-radius:4px"></div>
<div class="a" style="top:647.96px;font-size:16px;line-height:16px;color:#ffffff;left:-205.60px;width:600px;text-align:center;transform:scaleX(0.9);transform-origin:center 0;">0.01</div>
<div class="a" style="left:1886.8px;top:643.1px;width:64.2px;height:28px;background:#000;border-radius:4px"></div>
<div class="a" style="top:648.23px;font-size:15.2px;line-height:15.2px;color:#ffffff;left:1619.00px;width:600px;text-align:center;transform:scaleX(0.93);transform-origin:center 0;">156.02</div>
<div class="a" style="left:1805.6px;top:882.6px;width:145.8px;height:27.8px;background:#000;border-radius:4px"></div>
<div class="a" style="top:887.83px;font-size:15.8px;line-height:15.8px;color:#ffffff;left:1578.80px;width:600px;text-align:center;transform:scaleX(0.93);transform-origin:center 0;">19 Jan 2026, 10:30</div>
<div class="a" style="left:1580.3px;top:684px;width:275px;height:136px;background:#040509;border-radius:6px"></div>
<div class="a" style="top:708.29px;font-size:19.5px;line-height:19.5px;color:#ffffff;letter-spacing:-0.45px;left:1600.80px;">19 Jan 2026, 10:30</div>
<div class="a" style="top:748.92px;font-size:19px;line-height:19px;color:#d5d9e1;letter-spacing:-0.2px;left:1618.20px;">SOL Price</div>
<div class="a" style="top:748.92px;font-size:19px;line-height:19px;color:#ffffff;right:166.80px;text-align:right;">$133.28</div>
<div class="a" style="top:777.62px;font-size:19px;line-height:19px;color:#d5d9e1;letter-spacing:0.3px;left:1618.20px;">OI-Weighted</div>
<div class="a" style="top:777.62px;font-size:19px;line-height:19px;color:#ffffff;right:166.80px;text-align:right;">-0.0004%</div>
<svg width="2000" height="1003" style="pointer-events:none">
<circle cx="1606" cy="759" r="6.2" fill="#dcdde2"/>
<circle cx="1606" cy="787.7" r="5.3" fill="#e04848" stroke="#f0f0f0" stroke-width="1.8"/>
<circle cx="1878.9" cy="772.8" r="5.5" fill="#ffffff" stroke="#e04848" stroke-width="2.2"/>
<circle cx="1878.9" cy="796.5" r="6" fill="#dcdde2" stroke="#ffffff" stroke-width="1.2"/>
<g fill="#9a9a9a">
 <path d="M1749,829 L1751.5,829.5 L1751.5,832 L1761.8,832 L1762,829.5 L1764.5,829 L1764.5,833 C1766,834 1767,835 1767,836 L1771.3,836.5 C1771.5,838.5 1770,839 1767,839 C1767,844 1766,847 1764,849 C1766,850 1767,852 1766.5,854 C1766,856 1764,857 1762.6,857 L1762.6,862 L1758.2,862 L1758,859 L1756,859 L1756,862 L1751,862 L1751,857 C1748,856 1747,854 1747,852 C1747,851 1748,850 1749.5,849 C1747,847 1745.5,844 1745.5,839 C1743,839 1741.8,838.5 1741.9,836.5 L1746.5,836 C1746.5,835 1747.5,834 1749,833 Z"/>
 <path d="M1746.5,862 L1750.5,858.5" stroke="#9a9a9a" stroke-width="0.8"/>
</g>
</svg>
<div class="a" style="top:832.71px;font-size:23.5px;line-height:23.5px;color:#9a9a9a;font-weight:bold;left:1778.50px;transform:scaleX(0.84);transform-origin:0 0;">coinglass</div>
<svg width="2000" height="1003"><path d="M1836.4,819.7 L1845.2,819.7 C1843.5,835 1841,850 1839.6,860.6 C1838.8,848 1837.8,835 1836.4,819.7 Z" fill="#a3353a" fill-opacity="0.92"/></svg>
</body></html>
